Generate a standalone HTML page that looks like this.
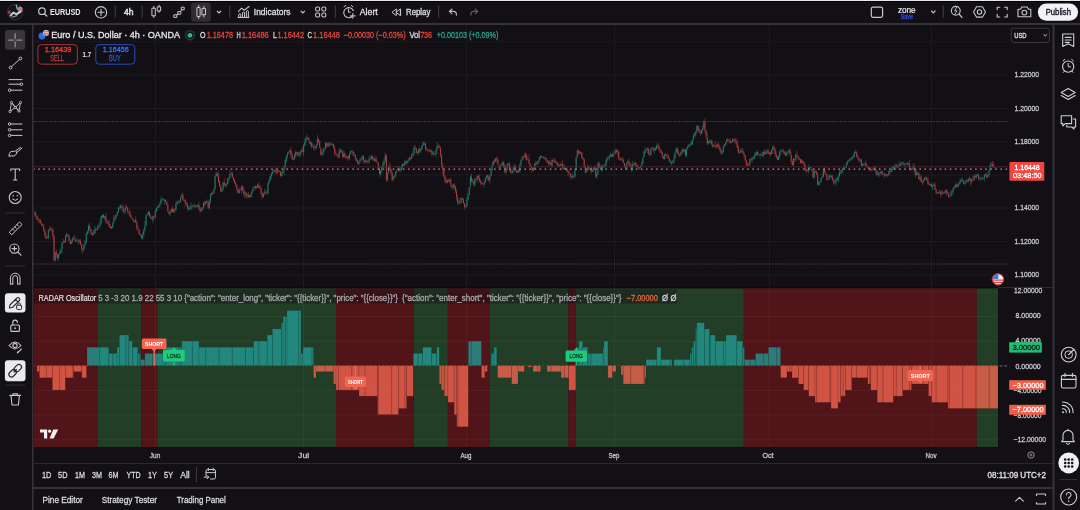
<!DOCTYPE html>
<html><head><meta charset="utf-8"><style>
html,body{margin:0;padding:0;background:#121014;}
body{width:1080px;height:510px;overflow:hidden;position:relative;font-family:"Liberation Sans",sans-serif;}
svg{position:absolute;left:0;top:0;will-change:transform;}
text{font-family:"Liberation Sans",sans-serif;}
</style></head><body>
<svg width="1080" height="510" viewBox="0 0 1080 510" shape-rendering="auto">
<rect x="0" y="0" width="1080" height="1" fill="#e9e7ec" />
<rect x="0" y="1" width="1080" height="1" fill="#000" />
<rect x="0" y="23" width="1080" height="2" fill="#35323a" />
<rect x="32" y="25" width="1.5" height="485" fill="#35323a" />
<rect x="1052.5" y="25" width="2" height="485" fill="#35323a" />
<rect x="33" y="287" width="965" height="1" fill="#0c0b0d" />
<rect x="998" y="287" width="55" height="1" fill="#2c2a30" />
<path d="M1000 366H1002.2M1004.4 366H1006.6" stroke="#77757b" stroke-width="1"/>
<rect x="33" y="463" width="1020" height="1" fill="#2a282d" />
<rect x="33" y="487" width="1020" height="2" fill="#35323a" />
<rect x="34" y="41.2" width="974" height="1" fill="#1c1a1f" />
<rect x="34" y="74.5" width="974" height="1" fill="#1c1a1f" />
<rect x="34" y="108" width="974" height="1" fill="#1c1a1f" />
<rect x="34" y="141.5" width="974" height="1" fill="#1c1a1f" />
<rect x="34" y="174.5" width="974" height="1" fill="#1c1a1f" />
<rect x="34" y="207.5" width="974" height="1" fill="#1c1a1f" />
<rect x="34" y="241" width="974" height="1" fill="#1c1a1f" />
<rect x="34" y="274.5" width="974" height="1" fill="#1c1a1f" />
<rect x="155" y="25" width="1" height="422" fill="#1c1a1f" />
<rect x="303" y="25" width="1" height="422" fill="#1c1a1f" />
<rect x="466" y="25" width="1" height="422" fill="#1c1a1f" />
<rect x="614" y="25" width="1" height="422" fill="#1c1a1f" />
<rect x="769" y="25" width="1" height="422" fill="#1c1a1f" />
<rect x="931" y="25" width="1" height="422" fill="#1c1a1f" />
<rect x="34.0" y="288.5" width="64.0" height="158.5" fill="#511519" />
<rect x="98.0" y="288.5" width="43.5" height="158.5" fill="#233e27" />
<rect x="141.5" y="288.5" width="16.0" height="158.5" fill="#511519" />
<rect x="157.5" y="288.5" width="178.5" height="158.5" fill="#233e27" />
<rect x="336.0" y="288.5" width="77.8" height="158.5" fill="#511519" />
<rect x="413.8" y="288.5" width="34.1" height="158.5" fill="#233e27" />
<rect x="447.9" y="288.5" width="42.1" height="158.5" fill="#511519" />
<rect x="490.0" y="288.5" width="78.5" height="158.5" fill="#233e27" />
<rect x="568.5" y="288.5" width="7.5" height="158.5" fill="#511519" />
<rect x="576.0" y="288.5" width="167.8" height="158.5" fill="#233e27" />
<rect x="743.8" y="288.5" width="233.0" height="158.5" fill="#511519" />
<rect x="976.8" y="288.5" width="21.2" height="158.5" fill="#233e27" />
<rect x="155" y="288.5" width="1" height="158.5" fill="rgba(255,255,255,0.04)" />
<rect x="303" y="288.5" width="1" height="158.5" fill="rgba(255,255,255,0.04)" />
<rect x="466" y="288.5" width="1" height="158.5" fill="rgba(255,255,255,0.04)" />
<rect x="614" y="288.5" width="1" height="158.5" fill="rgba(255,255,255,0.04)" />
<rect x="769" y="288.5" width="1" height="158.5" fill="rgba(255,255,255,0.04)" />
<rect x="931" y="288.5" width="1" height="158.5" fill="rgba(255,255,255,0.04)" />
<rect x="34" y="291.4" width="964" height="1" fill="rgba(255,255,255,0.045)" />
<rect x="34" y="316.0" width="964" height="1" fill="rgba(255,255,255,0.045)" />
<rect x="34" y="340.7" width="964" height="1" fill="rgba(255,255,255,0.045)" />
<rect x="34" y="389.9" width="964" height="1" fill="rgba(255,255,255,0.045)" />
<rect x="34" y="414.6" width="964" height="1" fill="rgba(255,255,255,0.045)" />
<rect x="34" y="439.2" width="964" height="1" fill="rgba(255,255,255,0.045)" />
<rect x="34" y="289.5" width="643" height="14" fill="rgba(14,12,16,0.36)" />
<rect x="37.0" y="365.6" width="2.4" height="6.1" fill="rgba(248,102,82,0.76)" stroke="rgba(0,0,0,0.18)" stroke-width="0.6"/>
<rect x="39.4" y="365.6" width="13.0" height="12.2" fill="rgba(248,102,82,0.76)" stroke="rgba(0,0,0,0.18)" stroke-width="0.6"/>
<rect x="52.4" y="365.6" width="12.9" height="24.5" fill="rgba(248,102,82,0.76)" stroke="rgba(0,0,0,0.18)" stroke-width="0.6"/>
<rect x="65.3" y="365.6" width="8.2" height="12.2" fill="rgba(248,102,82,0.76)" stroke="rgba(0,0,0,0.18)" stroke-width="0.6"/>
<rect x="73.5" y="365.6" width="8.3" height="6.1" fill="rgba(248,102,82,0.76)" stroke="rgba(0,0,0,0.18)" stroke-width="0.6"/>
<rect x="81.8" y="365.6" width="4.7" height="12.2" fill="rgba(248,102,82,0.76)" stroke="rgba(0,0,0,0.18)" stroke-width="0.6"/>
<rect x="87.0" y="347.2" width="21.8" height="18.4" fill="rgba(34,160,155,0.74)" stroke="rgba(0,0,0,0.18)" stroke-width="0.6"/>
<rect x="108.8" y="353.4" width="8.2" height="12.2" fill="rgba(34,160,155,0.74)" stroke="rgba(0,0,0,0.18)" stroke-width="0.6"/>
<rect x="117.0" y="347.2" width="2.4" height="18.4" fill="rgba(34,160,155,0.74)" stroke="rgba(0,0,0,0.18)" stroke-width="0.6"/>
<rect x="119.4" y="335.0" width="9.4" height="30.6" fill="rgba(34,160,155,0.74)" stroke="rgba(0,0,0,0.18)" stroke-width="0.6"/>
<rect x="128.8" y="341.1" width="3.6" height="24.5" fill="rgba(34,160,155,0.74)" stroke="rgba(0,0,0,0.18)" stroke-width="0.6"/>
<rect x="132.4" y="347.2" width="5.4" height="18.4" fill="rgba(34,160,155,0.74)" stroke="rgba(0,0,0,0.18)" stroke-width="0.6"/>
<rect x="137.8" y="353.4" width="2.8" height="12.2" fill="rgba(34,160,155,0.74)" stroke="rgba(0,0,0,0.18)" stroke-width="0.6"/>
<rect x="140.6" y="359.5" width="4.2" height="6.1" fill="rgba(34,160,155,0.74)" stroke="rgba(0,0,0,0.18)" stroke-width="0.6"/>
<rect x="144.8" y="353.4" width="18.2" height="12.2" fill="rgba(34,160,155,0.74)" stroke="rgba(0,0,0,0.18)" stroke-width="0.6"/>
<rect x="163.0" y="347.2" width="18.8" height="18.4" fill="rgba(34,160,155,0.74)" stroke="rgba(0,0,0,0.18)" stroke-width="0.6"/>
<rect x="181.8" y="341.1" width="17.2" height="24.5" fill="rgba(34,160,155,0.74)" stroke="rgba(0,0,0,0.18)" stroke-width="0.6"/>
<rect x="199.0" y="347.2" width="54.5" height="18.4" fill="rgba(34,160,155,0.74)" stroke="rgba(0,0,0,0.18)" stroke-width="0.6"/>
<rect x="253.5" y="341.1" width="13.7" height="24.5" fill="rgba(34,160,155,0.74)" stroke="rgba(0,0,0,0.18)" stroke-width="0.6"/>
<rect x="267.2" y="335.0" width="5.2" height="30.6" fill="rgba(34,160,155,0.74)" stroke="rgba(0,0,0,0.18)" stroke-width="0.6"/>
<rect x="272.4" y="328.9" width="8.9" height="36.8" fill="rgba(34,160,155,0.74)" stroke="rgba(0,0,0,0.18)" stroke-width="0.6"/>
<rect x="281.3" y="322.7" width="1.7" height="42.9" fill="rgba(34,160,155,0.74)" stroke="rgba(0,0,0,0.18)" stroke-width="0.6"/>
<rect x="283.0" y="316.6" width="4.0" height="49.0" fill="rgba(34,160,155,0.74)" stroke="rgba(0,0,0,0.18)" stroke-width="0.6"/>
<rect x="287.0" y="310.5" width="14.0" height="55.1" fill="rgba(34,160,155,0.74)" stroke="rgba(0,0,0,0.18)" stroke-width="0.6"/>
<rect x="301.0" y="353.4" width="2.0" height="12.2" fill="rgba(34,160,155,0.74)" stroke="rgba(0,0,0,0.18)" stroke-width="0.6"/>
<rect x="303.0" y="347.2" width="10.5" height="18.4" fill="rgba(34,160,155,0.74)" stroke="rgba(0,0,0,0.18)" stroke-width="0.6"/>
<rect x="313.5" y="365.6" width="2.5" height="12.2" fill="rgba(248,102,82,0.76)" stroke="rgba(0,0,0,0.18)" stroke-width="0.6"/>
<rect x="316.0" y="365.6" width="17.5" height="6.1" fill="rgba(248,102,82,0.76)" stroke="rgba(0,0,0,0.18)" stroke-width="0.6"/>
<rect x="333.5" y="365.6" width="2.5" height="18.4" fill="rgba(248,102,82,0.76)" stroke="rgba(0,0,0,0.18)" stroke-width="0.6"/>
<rect x="336.0" y="365.6" width="23.0" height="24.5" fill="rgba(248,102,82,0.76)" stroke="rgba(0,0,0,0.18)" stroke-width="0.6"/>
<rect x="359.0" y="365.6" width="18.6" height="30.6" fill="rgba(248,102,82,0.76)" stroke="rgba(0,0,0,0.18)" stroke-width="0.6"/>
<rect x="377.6" y="365.6" width="20.9" height="49.0" fill="rgba(248,102,82,0.76)" stroke="rgba(0,0,0,0.18)" stroke-width="0.6"/>
<rect x="398.5" y="365.6" width="8.1" height="42.9" fill="rgba(248,102,82,0.76)" stroke="rgba(0,0,0,0.18)" stroke-width="0.6"/>
<rect x="406.6" y="365.6" width="6.7" height="30.6" fill="rgba(248,102,82,0.76)" stroke="rgba(0,0,0,0.18)" stroke-width="0.6"/>
<rect x="413.3" y="353.4" width="9.4" height="12.2" fill="rgba(34,160,155,0.74)" stroke="rgba(0,0,0,0.18)" stroke-width="0.6"/>
<rect x="422.7" y="347.2" width="8.9" height="18.4" fill="rgba(34,160,155,0.74)" stroke="rgba(0,0,0,0.18)" stroke-width="0.6"/>
<rect x="431.6" y="353.4" width="5.1" height="12.2" fill="rgba(34,160,155,0.74)" stroke="rgba(0,0,0,0.18)" stroke-width="0.6"/>
<rect x="436.7" y="347.2" width="2.6" height="18.4" fill="rgba(34,160,155,0.74)" stroke="rgba(0,0,0,0.18)" stroke-width="0.6"/>
<rect x="439.3" y="365.6" width="2.2" height="18.4" fill="rgba(248,102,82,0.76)" stroke="rgba(0,0,0,0.18)" stroke-width="0.6"/>
<rect x="441.5" y="365.6" width="2.5" height="24.5" fill="rgba(248,102,82,0.76)" stroke="rgba(0,0,0,0.18)" stroke-width="0.6"/>
<rect x="444.0" y="365.6" width="3.9" height="30.6" fill="rgba(248,102,82,0.76)" stroke="rgba(0,0,0,0.18)" stroke-width="0.6"/>
<rect x="447.9" y="365.6" width="6.3" height="36.8" fill="rgba(248,102,82,0.76)" stroke="rgba(0,0,0,0.18)" stroke-width="0.6"/>
<rect x="454.2" y="365.6" width="2.6" height="49.0" fill="rgba(248,102,82,0.76)" stroke="rgba(0,0,0,0.18)" stroke-width="0.6"/>
<rect x="456.8" y="365.6" width="11.5" height="61.2" fill="rgba(248,102,82,0.76)" stroke="rgba(0,0,0,0.18)" stroke-width="0.6"/>
<rect x="468.3" y="341.1" width="13.2" height="24.5" fill="rgba(34,160,155,0.74)" stroke="rgba(0,0,0,0.18)" stroke-width="0.6"/>
<rect x="481.5" y="365.6" width="3.3" height="12.2" fill="rgba(248,102,82,0.76)" stroke="rgba(0,0,0,0.18)" stroke-width="0.6"/>
<rect x="484.8" y="365.6" width="2.6" height="6.1" fill="rgba(248,102,82,0.76)" stroke="rgba(0,0,0,0.18)" stroke-width="0.6"/>
<rect x="491.2" y="353.4" width="2.8" height="12.2" fill="rgba(34,160,155,0.74)" stroke="rgba(0,0,0,0.18)" stroke-width="0.6"/>
<rect x="494.0" y="347.2" width="2.8" height="18.4" fill="rgba(34,160,155,0.74)" stroke="rgba(0,0,0,0.18)" stroke-width="0.6"/>
<rect x="497.6" y="365.6" width="14.0" height="12.2" fill="rgba(248,102,82,0.76)" stroke="rgba(0,0,0,0.18)" stroke-width="0.6"/>
<rect x="511.6" y="365.6" width="6.4" height="18.4" fill="rgba(248,102,82,0.76)" stroke="rgba(0,0,0,0.18)" stroke-width="0.6"/>
<rect x="518.0" y="365.6" width="6.4" height="6.1" fill="rgba(248,102,82,0.76)" stroke="rgba(0,0,0,0.18)" stroke-width="0.6"/>
<rect x="527.9" y="365.6" width="3.8" height="1.5" fill="rgba(248,102,82,0.76)" stroke="rgba(0,0,0,0.18)" stroke-width="0.6"/>
<rect x="533.0" y="365.6" width="7.6" height="6.1" fill="rgba(248,102,82,0.76)" stroke="rgba(0,0,0,0.18)" stroke-width="0.6"/>
<rect x="547.0" y="365.6" width="14.0" height="6.1" fill="rgba(248,102,82,0.76)" stroke="rgba(0,0,0,0.18)" stroke-width="0.6"/>
<rect x="561.0" y="365.6" width="7.7" height="12.2" fill="rgba(248,102,82,0.76)" stroke="rgba(0,0,0,0.18)" stroke-width="0.6"/>
<rect x="568.7" y="365.6" width="7.1" height="24.5" fill="rgba(248,102,82,0.76)" stroke="rgba(0,0,0,0.18)" stroke-width="0.6"/>
<rect x="575.8" y="347.2" width="3.1" height="18.4" fill="rgba(34,160,155,0.74)" stroke="rgba(0,0,0,0.18)" stroke-width="0.6"/>
<rect x="578.9" y="341.1" width="3.8" height="24.5" fill="rgba(34,160,155,0.74)" stroke="rgba(0,0,0,0.18)" stroke-width="0.6"/>
<rect x="582.7" y="347.2" width="5.1" height="18.4" fill="rgba(34,160,155,0.74)" stroke="rgba(0,0,0,0.18)" stroke-width="0.6"/>
<rect x="587.8" y="353.4" width="15.2" height="12.2" fill="rgba(34,160,155,0.74)" stroke="rgba(0,0,0,0.18)" stroke-width="0.6"/>
<rect x="603.0" y="347.2" width="1.0" height="18.4" fill="rgba(34,160,155,0.74)" stroke="rgba(0,0,0,0.18)" stroke-width="0.6"/>
<rect x="604.0" y="341.1" width="3.9" height="24.5" fill="rgba(34,160,155,0.74)" stroke="rgba(0,0,0,0.18)" stroke-width="0.6"/>
<rect x="607.9" y="365.6" width="4.5" height="12.2" fill="rgba(248,102,82,0.76)" stroke="rgba(0,0,0,0.18)" stroke-width="0.6"/>
<rect x="612.4" y="365.6" width="3.6" height="6.1" fill="rgba(248,102,82,0.76)" stroke="rgba(0,0,0,0.18)" stroke-width="0.6"/>
<rect x="621.0" y="365.6" width="2.2" height="9.2" fill="rgba(248,102,82,0.76)" stroke="rgba(0,0,0,0.18)" stroke-width="0.6"/>
<rect x="623.2" y="365.6" width="21.6" height="18.4" fill="rgba(248,102,82,0.76)" stroke="rgba(0,0,0,0.18)" stroke-width="0.6"/>
<rect x="644.8" y="365.6" width="1.2" height="12.2" fill="rgba(248,102,82,0.76)" stroke="rgba(0,0,0,0.18)" stroke-width="0.6"/>
<rect x="646.0" y="359.5" width="10.8" height="6.1" fill="rgba(34,160,155,0.74)" stroke="rgba(0,0,0,0.18)" stroke-width="0.6"/>
<rect x="656.8" y="347.2" width="4.2" height="18.4" fill="rgba(34,160,155,0.74)" stroke="rgba(0,0,0,0.18)" stroke-width="0.6"/>
<rect x="661.0" y="359.5" width="11.0" height="6.1" fill="rgba(34,160,155,0.74)" stroke="rgba(0,0,0,0.18)" stroke-width="0.6"/>
<rect x="673.8" y="359.5" width="16.2" height="6.1" fill="rgba(34,160,155,0.74)" stroke="rgba(0,0,0,0.18)" stroke-width="0.6"/>
<rect x="690.0" y="353.4" width="1.7" height="12.2" fill="rgba(34,160,155,0.74)" stroke="rgba(0,0,0,0.18)" stroke-width="0.6"/>
<rect x="691.7" y="347.2" width="1.8" height="18.4" fill="rgba(34,160,155,0.74)" stroke="rgba(0,0,0,0.18)" stroke-width="0.6"/>
<rect x="693.5" y="341.1" width="2.0" height="24.5" fill="rgba(34,160,155,0.74)" stroke="rgba(0,0,0,0.18)" stroke-width="0.6"/>
<rect x="695.5" y="328.9" width="1.3" height="36.8" fill="rgba(34,160,155,0.74)" stroke="rgba(0,0,0,0.18)" stroke-width="0.6"/>
<rect x="696.8" y="322.7" width="7.6" height="42.9" fill="rgba(34,160,155,0.74)" stroke="rgba(0,0,0,0.18)" stroke-width="0.6"/>
<rect x="704.4" y="328.9" width="5.1" height="36.8" fill="rgba(34,160,155,0.74)" stroke="rgba(0,0,0,0.18)" stroke-width="0.6"/>
<rect x="709.5" y="335.0" width="5.9" height="30.6" fill="rgba(34,160,155,0.74)" stroke="rgba(0,0,0,0.18)" stroke-width="0.6"/>
<rect x="715.4" y="341.1" width="10.6" height="24.5" fill="rgba(34,160,155,0.74)" stroke="rgba(0,0,0,0.18)" stroke-width="0.6"/>
<rect x="726.0" y="335.0" width="10.8" height="30.6" fill="rgba(34,160,155,0.74)" stroke="rgba(0,0,0,0.18)" stroke-width="0.6"/>
<rect x="736.8" y="341.1" width="5.9" height="24.5" fill="rgba(34,160,155,0.74)" stroke="rgba(0,0,0,0.18)" stroke-width="0.6"/>
<rect x="742.7" y="347.2" width="1.8" height="18.4" fill="rgba(34,160,155,0.74)" stroke="rgba(0,0,0,0.18)" stroke-width="0.6"/>
<rect x="744.5" y="359.5" width="11.0" height="6.1" fill="rgba(34,160,155,0.74)" stroke="rgba(0,0,0,0.18)" stroke-width="0.6"/>
<rect x="755.5" y="353.4" width="12.9" height="12.2" fill="rgba(34,160,155,0.74)" stroke="rgba(0,0,0,0.18)" stroke-width="0.6"/>
<rect x="768.4" y="347.2" width="12.2" height="18.4" fill="rgba(34,160,155,0.74)" stroke="rgba(0,0,0,0.18)" stroke-width="0.6"/>
<rect x="780.6" y="365.6" width="6.4" height="12.2" fill="rgba(248,102,82,0.76)" stroke="rgba(0,0,0,0.18)" stroke-width="0.6"/>
<rect x="787.0" y="365.6" width="5.0" height="6.1" fill="rgba(248,102,82,0.76)" stroke="rgba(0,0,0,0.18)" stroke-width="0.6"/>
<rect x="792.0" y="365.6" width="6.5" height="12.2" fill="rgba(248,102,82,0.76)" stroke="rgba(0,0,0,0.18)" stroke-width="0.6"/>
<rect x="798.5" y="365.6" width="5.1" height="18.4" fill="rgba(248,102,82,0.76)" stroke="rgba(0,0,0,0.18)" stroke-width="0.6"/>
<rect x="803.6" y="365.6" width="5.1" height="24.5" fill="rgba(248,102,82,0.76)" stroke="rgba(0,0,0,0.18)" stroke-width="0.6"/>
<rect x="808.7" y="365.6" width="6.3" height="30.6" fill="rgba(248,102,82,0.76)" stroke="rgba(0,0,0,0.18)" stroke-width="0.6"/>
<rect x="815.0" y="365.6" width="16.0" height="36.8" fill="rgba(248,102,82,0.76)" stroke="rgba(0,0,0,0.18)" stroke-width="0.6"/>
<rect x="831.0" y="365.6" width="7.0" height="42.9" fill="rgba(248,102,82,0.76)" stroke="rgba(0,0,0,0.18)" stroke-width="0.6"/>
<rect x="838.0" y="365.6" width="2.7" height="36.8" fill="rgba(248,102,82,0.76)" stroke="rgba(0,0,0,0.18)" stroke-width="0.6"/>
<rect x="840.7" y="365.6" width="4.6" height="30.6" fill="rgba(248,102,82,0.76)" stroke="rgba(0,0,0,0.18)" stroke-width="0.6"/>
<rect x="845.3" y="365.6" width="6.4" height="24.5" fill="rgba(248,102,82,0.76)" stroke="rgba(0,0,0,0.18)" stroke-width="0.6"/>
<rect x="851.7" y="365.6" width="16.1" height="12.2" fill="rgba(248,102,82,0.76)" stroke="rgba(0,0,0,0.18)" stroke-width="0.6"/>
<rect x="867.8" y="365.6" width="3.0" height="18.4" fill="rgba(248,102,82,0.76)" stroke="rgba(0,0,0,0.18)" stroke-width="0.6"/>
<rect x="870.8" y="365.6" width="6.4" height="24.5" fill="rgba(248,102,82,0.76)" stroke="rgba(0,0,0,0.18)" stroke-width="0.6"/>
<rect x="877.2" y="365.6" width="16.1" height="36.8" fill="rgba(248,102,82,0.76)" stroke="rgba(0,0,0,0.18)" stroke-width="0.6"/>
<rect x="893.3" y="365.6" width="9.4" height="30.6" fill="rgba(248,102,82,0.76)" stroke="rgba(0,0,0,0.18)" stroke-width="0.6"/>
<rect x="902.7" y="365.6" width="8.8" height="24.5" fill="rgba(248,102,82,0.76)" stroke="rgba(0,0,0,0.18)" stroke-width="0.6"/>
<rect x="911.5" y="365.6" width="17.0" height="18.4" fill="rgba(248,102,82,0.76)" stroke="rgba(0,0,0,0.18)" stroke-width="0.6"/>
<rect x="928.5" y="365.6" width="3.3" height="30.6" fill="rgba(248,102,82,0.76)" stroke="rgba(0,0,0,0.18)" stroke-width="0.6"/>
<rect x="931.8" y="365.6" width="16.1" height="36.8" fill="rgba(248,102,82,0.76)" stroke="rgba(0,0,0,0.18)" stroke-width="0.6"/>
<rect x="947.9" y="365.6" width="50.1" height="42.9" fill="rgba(248,102,82,0.76)" stroke="rgba(0,0,0,0.18)" stroke-width="0.6"/>
<path d="M46.32 365.6V377.9 M59.60 365.6V390.1 M72.88 365.6V377.9 M99.44 347.2V365.6 M112.72 353.4V365.6 M126.00 335.0V365.6 M139.28 353.4V365.6 M152.56 353.4V365.6 M165.84 347.2V365.6 M179.12 347.2V365.6 M192.40 341.1V365.6 M205.68 347.2V365.6 M218.96 347.2V365.6 M232.24 347.2V365.6 M245.52 347.2V365.6 M258.80 341.1V365.6 M285.36 316.6V365.6 M298.64 310.5V365.6 M311.92 347.2V365.6 M325.20 365.6V371.7 M338.48 365.6V390.1 M351.76 365.6V390.1 M365.04 365.6V396.2 M378.32 365.6V414.6 M391.60 365.6V414.6 M404.88 365.6V408.5 M418.16 353.4V365.6 M444.72 365.6V396.2 M458.00 365.6V426.9 M471.28 341.1V365.6 M537.68 365.6V371.7 M550.96 365.6V371.7 M564.24 365.6V377.9 M577.52 347.2V365.6 M590.80 353.4V365.6 M630.64 365.6V384.0 M643.92 365.6V384.0 M670.48 359.5V365.6 M683.76 359.5V365.6 M710.32 335.0V365.6 M723.60 341.1V365.6 M750.16 359.5V365.6 M763.44 353.4V365.6 M776.72 347.2V365.6 M790.00 365.6V371.7 M816.56 365.6V402.4 M829.84 365.6V402.4 M843.12 365.6V396.2 M856.40 365.6V377.9 M869.68 365.6V384.0 M882.96 365.6V402.4 M896.24 365.6V396.2 M909.52 365.6V390.1 M922.80 365.6V384.0 M936.08 365.6V402.4 M949.36 365.6V408.5 M962.64 365.6V408.5 M975.92 365.6V408.5 M989.20 365.6V408.5" stroke="rgba(10,10,12,0.28)" stroke-width="0.9"/>
<line x1="34" y1="365.6" x2="1008" y2="365.6" stroke="rgba(200,200,210,0.14)" stroke-width="1" stroke-dasharray="2 2"/>
<path d="M41.40 221.5V226.0 M47.15 236.4V238.7 M48.30 229.7V238.5 M49.45 226.0V231.7 M55.20 251.5V261.1 M58.65 253.4V260.2 M59.80 249.7V254.9 M60.95 247.5V254.0 M62.10 241.9V252.9 M63.25 239.0V243.4 M65.55 234.7V243.3 M66.70 232.8V237.7 M71.30 239.5V244.2 M72.45 237.5V243.0 M77.05 238.0V242.1 M78.20 239.2V244.5 M83.95 244.1V251.0 M85.10 240.3V247.4 M86.25 232.1V244.2 M87.40 230.0V234.9 M88.55 224.2V234.3 M93.15 229.9V235.8 M94.30 226.1V234.0 M95.45 227.3V234.0 M97.75 224.6V229.8 M98.90 224.6V229.1 M100.05 219.2V227.7 M101.20 215.7V224.7 M102.35 214.6V218.6 M104.65 216.0V219.6 M111.55 226.2V229.2 M112.70 222.2V228.5 M113.85 214.9V224.3 M116.15 214.0V219.7 M117.30 211.4V215.7 M118.45 206.7V212.9 M120.75 204.5V209.9 M124.20 209.1V214.4 M125.35 205.3V213.5 M134.55 220.5V221.7 M142.60 232.3V239.9 M143.75 228.4V236.3 M144.90 221.0V231.7 M146.05 214.8V226.3 M147.20 212.9V216.1 M148.35 210.6V214.8 M152.95 215.6V223.3 M155.25 209.4V218.7 M156.40 207.6V212.2 M157.55 205.6V210.5 M158.70 205.0V207.9 M159.85 201.6V207.8 M161.00 196.5V204.0 M162.15 197.4V200.3 M163.30 198.4V200.5 M164.45 199.2V204.7 M170.20 210.1V215.9 M171.35 208.0V212.0 M173.65 208.7V213.2 M175.95 201.6V211.8 M177.10 200.4V204.8 M179.40 200.5V202.5 M180.55 196.7V202.9 M181.70 193.4V198.1 M188.60 205.3V211.0 M190.90 202.1V210.6 M193.20 205.2V208.9 M194.35 203.4V206.4 M196.65 205.0V207.5 M197.80 204.0V207.4 M201.25 207.3V211.8 M202.40 207.2V211.3 M203.55 201.5V209.2 M205.85 200.8V205.5 M209.30 199.2V210.0 M210.45 192.9V203.6 M211.60 192.4V196.5 M213.90 188.6V194.2 M215.05 174.9V190.3 M216.20 171.9V176.4 M221.95 188.2V192.3 M223.10 181.9V191.0 M225.40 183.3V187.5 M226.55 182.5V187.4 M227.70 177.7V185.2 M228.85 177.0V182.4 M230.00 169.8V178.3 M231.15 172.1V174.1 M239.20 187.5V193.7 M240.35 188.5V190.3 M241.50 185.4V193.7 M244.95 190.5V198.3 M247.25 193.5V198.6 M249.55 195.2V198.1 M250.70 193.4V197.3 M251.85 190.6V197.9 M253.00 187.0V192.0 M254.15 186.1V188.4 M257.60 183.4V188.0 M263.35 192.7V197.9 M264.50 189.0V195.3 M267.95 182.1V194.2 M269.10 178.1V184.8 M270.25 175.6V181.1 M271.40 172.2V179.1 M272.55 169.9V174.8 M273.70 169.5V173.4 M277.15 169.9V174.1 M281.75 171.3V177.5 M282.90 169.9V173.9 M284.05 165.3V175.4 M285.20 159.0V169.1 M286.35 155.1V162.9 M287.50 151.5V158.8 M288.65 151.0V154.1 M289.80 149.0V153.0 M293.25 157.2V160.4 M294.40 153.4V160.1 M295.55 150.4V157.7 M299.00 151.5V156.9 M300.15 151.2V157.0 M301.30 149.2V154.9 M303.60 144.3V156.1 M304.75 138.3V146.9 M305.90 135.8V145.3 M307.05 134.0V139.8 M310.50 141.7V145.5 M315.10 146.5V150.1 M316.25 144.2V149.6 M317.40 134.8V146.0 M322.00 151.2V156.6 M323.15 147.1V156.1 M324.30 147.6V152.1 M325.45 141.9V149.5 M327.75 142.0V147.4 M328.90 141.5V147.1 M332.35 142.9V145.2 M339.25 148.4V158.0 M340.40 148.0V153.3 M343.85 150.4V157.7 M347.30 155.9V160.0 M349.60 153.0V159.9 M350.75 150.4V154.8 M354.20 152.0V156.5 M358.80 161.7V165.6 M359.95 158.5V164.2 M361.10 157.6V160.9 M362.25 155.0V160.0 M366.85 160.1V164.2 M369.15 155.8V163.7 M370.30 155.7V159.7 M371.45 154.7V159.6 M374.90 156.4V161.9 M380.65 169.6V177.5 M381.80 165.8V173.2 M382.95 160.5V168.3 M384.10 157.6V167.9 M385.25 152.5V162.4 M387.55 172.1V181.9 M388.70 164.8V173.7 M393.30 175.4V180.6 M394.45 175.0V177.8 M395.60 171.5V177.8 M396.75 169.6V173.8 M397.90 165.8V171.4 M400.20 167.3V172.0 M401.35 164.5V170.9 M402.50 163.5V169.2 M404.80 159.7V165.6 M407.10 160.2V164.7 M408.25 158.2V163.1 M409.40 156.3V160.4 M411.70 153.1V159.1 M412.85 151.3V156.5 M414.00 145.2V156.3 M418.60 148.1V155.3 M420.90 147.7V153.1 M422.05 144.8V150.1 M423.20 141.2V146.0 M424.35 141.7V145.6 M432.40 150.7V155.6 M435.85 148.7V157.8 M437.00 141.9V154.2 M447.35 178.9V183.2 M449.65 178.2V182.9 M453.10 183.9V190.0 M458.85 200.1V204.4 M461.15 197.2V203.4 M465.75 205.2V208.0 M466.90 197.5V207.4 M468.05 192.8V200.1 M469.20 186.7V195.1 M470.35 175.4V188.8 M474.95 176.9V186.8 M477.25 175.0V182.9 M484.15 180.8V187.7 M485.30 177.3V183.5 M486.45 175.0V179.0 M489.90 175.7V183.6 M491.05 168.8V176.5 M492.20 161.9V171.6 M493.35 160.4V165.6 M495.65 157.8V162.2 M500.25 164.6V169.7 M501.40 163.3V166.7 M502.55 161.2V165.4 M506.00 167.0V174.7 M507.15 163.2V171.8 M508.30 162.9V165.7 M512.90 167.4V173.8 M514.05 163.8V171.4 M517.50 170.3V172.7 M518.65 168.5V173.0 M519.80 163.2V173.0 M520.95 159.2V166.7 M522.10 156.0V161.1 M523.25 155.9V159.2 M525.55 152.3V159.9 M533.60 166.8V171.0 M534.75 162.3V169.5 M537.05 160.9V164.6 M538.20 159.8V165.5 M539.35 156.8V162.5 M540.50 155.3V159.2 M545.10 156.3V159.7 M549.70 160.0V164.7 M552.00 157.7V167.9 M558.90 163.7V167.3 M561.20 161.4V166.1 M564.65 164.3V170.1 M571.55 174.5V178.0 M572.70 172.4V178.7 M575.00 168.1V177.2 M576.15 156.5V170.8 M577.30 148.8V157.7 M579.60 151.1V154.4 M586.50 169.4V173.4 M587.65 164.4V171.5 M589.95 167.2V170.6 M592.25 168.9V172.2 M593.40 167.2V171.9 M596.85 172.8V178.4 M598.00 161.8V174.9 M600.30 164.6V169.4 M602.60 165.1V171.5 M604.90 163.3V168.5 M606.05 159.0V166.7 M607.20 156.0V162.5 M608.35 156.0V159.2 M609.50 154.5V160.9 M610.65 151.8V157.1 M612.95 150.8V157.5 M614.10 152.9V155.5 M615.25 148.8V154.6 M626.75 162.6V169.2 M627.90 159.7V164.0 M632.50 161.0V171.2 M633.65 163.1V165.7 M634.80 160.9V165.3 M637.10 164.5V168.1 M639.40 167.1V169.9 M640.55 165.5V168.3 M641.70 161.1V166.6 M642.85 157.4V164.2 M644.00 150.9V158.1 M645.15 147.0V154.3 M646.30 148.0V150.7 M647.45 147.2V153.3 M650.90 147.4V155.9 M654.35 147.3V153.5 M655.50 146.8V150.9 M656.65 144.6V149.9 M664.70 153.8V159.9 M670.45 159.9V163.5 M672.75 160.1V163.4 M673.90 155.0V164.3 M675.05 150.7V159.1 M676.20 147.7V153.1 M680.80 152.1V156.0 M681.95 149.2V154.2 M684.25 148.7V152.6 M686.55 147.4V158.0 M687.70 145.2V149.6 M688.85 144.0V147.7 M690.00 143.7V147.2 M691.15 141.1V145.4 M692.30 139.1V145.1 M693.45 133.2V140.3 M694.60 132.6V136.5 M695.75 130.2V138.0 M696.90 125.3V133.1 M701.50 129.1V134.4 M702.65 125.3V132.9 M703.80 120.7V130.0 M708.40 140.7V144.6 M710.70 139.4V144.1 M714.15 144.7V147.2 M717.60 142.0V147.6 M722.20 150.1V154.9 M723.35 144.5V152.5 M724.50 144.1V147.4 M725.65 141.9V146.0 M726.80 138.8V143.6 M731.40 140.8V143.2 M732.55 138.3V142.9 M739.45 149.3V153.6 M740.60 148.6V153.1 M741.75 147.8V152.8 M749.80 158.8V166.0 M752.10 157.2V163.1 M754.40 152.4V159.6 M755.55 151.9V156.7 M756.70 150.3V155.8 M759.00 153.9V156.2 M760.15 153.9V158.7 M762.45 151.3V156.9 M763.60 151.0V157.9 M765.90 150.2V154.5 M767.05 148.9V154.4 M769.35 151.9V155.0 M771.65 149.3V154.8 M772.80 145.4V153.8 M778.55 154.9V160.6 M779.70 150.4V158.7 M780.85 149.7V154.9 M782.00 149.5V151.8 M786.60 152.2V156.5 M787.75 150.1V153.8 M788.90 150.2V156.1 M793.50 157.8V166.6 M795.80 153.1V161.5 M801.55 159.0V163.7 M808.45 164.4V173.6 M810.75 166.7V170.6 M814.20 169.9V179.5 M818.80 180.2V185.2 M819.95 181.3V185.7 M821.10 177.3V183.1 M822.25 173.5V178.3 M823.40 168.1V177.4 M829.15 173.6V180.3 M830.30 174.9V177.5 M834.90 178.9V183.9 M836.05 177.7V186.5 M837.20 176.6V181.0 M838.35 173.4V182.9 M839.50 170.0V176.9 M840.65 169.6V173.9 M841.80 168.6V174.6 M842.95 167.1V172.9 M844.10 165.1V168.2 M845.25 166.8V167.9 M846.40 161.7V168.6 M847.55 159.9V165.2 M848.70 159.4V163.1 M849.85 157.3V161.1 M851.00 157.6V161.6 M852.15 155.9V160.1 M853.30 153.6V158.9 M854.45 151.3V157.2 M860.20 159.0V162.3 M862.50 162.9V167.1 M864.80 162.3V165.1 M869.40 166.4V171.5 M871.70 168.8V171.4 M872.85 168.4V170.7 M874.00 166.7V169.0 M878.60 170.8V177.4 M879.75 172.4V176.4 M880.90 170.8V174.4 M886.65 174.1V176.0 M888.95 170.0V176.1 M891.25 167.5V172.5 M892.40 165.6V171.5 M894.70 164.6V169.9 M895.85 163.9V167.6 M898.15 164.8V169.2 M899.30 160.9V167.1 M900.45 162.4V166.0 M901.60 161.3V165.5 M902.75 161.5V164.9 M903.90 161.8V165.6 M906.20 163.3V164.6 M908.50 162.8V165.6 M911.95 167.8V170.3 M913.10 163.6V170.6 M916.55 169.7V175.7 M920.00 174.4V181.6 M923.45 179.2V183.5 M924.60 177.3V180.9 M930.35 183.6V185.9 M932.65 184.6V190.5 M933.80 182.4V186.0 M938.40 191.3V194.0 M939.55 189.3V192.9 M941.85 189.9V195.0 M944.15 191.7V193.5 M945.30 189.7V193.7 M949.90 196.0V197.7 M951.05 189.9V196.6 M952.20 189.6V196.0 M953.35 186.3V193.6 M954.50 185.7V189.0 M955.65 182.4V187.7 M957.95 183.3V188.1 M959.10 181.6V186.1 M960.25 178.1V184.3 M962.55 177.6V182.0 M964.85 181.9V185.7 M966.00 179.1V183.5 M968.30 178.0V183.5 M969.45 176.2V180.9 M971.75 178.7V184.2 M974.05 175.1V181.1 M976.35 173.8V179.2 M980.95 176.4V181.4 M982.10 176.6V179.0 M983.25 177.7V179.5 M984.40 174.7V181.7 M987.85 174.1V178.3 M989.00 169.5V177.1 M990.15 162.9V171.5 M991.30 161.9V166.2 M994.75 166.6V168.3" stroke="#2a8c7c" stroke-width="0.5" opacity="0.85"/>
<path d="M34.50 211.5V215.2 M35.65 211.1V217.3 M36.80 214.8V220.2 M37.95 215.6V222.7 M39.10 218.5V223.0 M40.25 218.8V224.1 M42.55 223.2V226.3 M43.70 223.8V231.9 M44.85 229.2V237.8 M46.00 232.7V240.4 M50.60 226.6V230.5 M51.75 227.9V232.7 M52.90 227.2V239.7 M54.05 234.4V262.2 M56.35 249.0V257.6 M57.50 254.1V260.7 M64.40 240.7V242.9 M67.85 233.5V235.5 M69.00 233.8V242.2 M70.15 239.0V244.7 M73.60 235.9V239.7 M74.75 234.9V241.2 M75.90 238.0V242.2 M79.35 239.2V244.0 M80.50 239.1V244.9 M81.65 243.8V251.9 M82.80 248.3V253.9 M89.70 223.0V230.6 M90.85 228.5V234.5 M92.00 232.3V235.8 M96.60 228.6V230.9 M103.50 213.4V218.4 M105.80 213.3V223.6 M106.95 219.5V223.4 M108.10 220.7V225.0 M109.25 220.0V227.8 M110.40 223.6V228.6 M115.00 215.3V220.8 M119.60 205.5V208.8 M121.90 205.8V207.8 M123.05 203.8V212.6 M126.50 204.6V208.6 M127.65 206.9V213.6 M128.80 210.8V214.1 M129.95 208.9V217.3 M131.10 214.7V218.1 M132.25 217.6V220.1 M133.40 218.5V222.6 M135.70 215.8V223.4 M136.85 220.3V231.2 M138.00 225.2V229.9 M139.15 229.0V235.2 M140.30 233.7V235.7 M141.45 234.2V238.4 M149.50 210.9V216.8 M150.65 213.9V218.5 M151.80 216.7V220.0 M154.10 215.2V219.0 M165.60 199.4V203.1 M166.75 201.0V205.5 M167.90 203.4V212.4 M169.05 211.3V215.2 M172.50 205.7V213.0 M174.80 208.2V213.4 M178.25 200.2V202.9 M182.85 192.4V200.5 M184.00 198.5V201.2 M185.15 199.0V206.8 M186.30 201.3V205.6 M187.45 202.2V210.5 M189.75 206.0V209.6 M192.05 204.3V207.4 M195.50 205.1V207.9 M198.95 201.6V210.4 M200.10 206.7V212.9 M204.70 200.9V206.7 M207.00 199.3V202.7 M208.15 200.7V209.0 M212.75 191.6V194.3 M217.35 172.2V177.3 M218.50 171.3V182.6 M219.65 180.4V187.3 M220.80 184.6V192.4 M224.25 178.0V186.2 M232.30 171.8V178.3 M233.45 176.7V181.6 M234.60 179.3V183.6 M235.75 181.8V187.3 M236.90 184.6V191.3 M238.05 189.4V193.5 M242.65 185.2V191.2 M243.80 186.6V197.0 M246.10 192.3V197.8 M248.40 191.9V198.1 M255.30 184.9V190.8 M256.45 186.2V188.7 M258.75 182.3V189.1 M259.90 185.3V188.5 M261.05 184.9V194.7 M262.20 192.1V199.9 M265.65 189.9V193.6 M266.80 191.2V194.8 M274.85 168.7V171.5 M276.00 167.4V174.7 M278.30 169.9V172.5 M279.45 170.2V172.1 M280.60 171.1V176.7 M290.95 146.5V157.4 M292.10 151.8V160.2 M296.70 151.7V156.3 M297.85 151.4V155.7 M302.45 146.8V152.1 M308.20 136.4V140.6 M309.35 137.6V144.7 M311.65 141.1V148.7 M312.80 143.6V146.6 M313.95 144.2V150.5 M318.55 138.5V142.9 M319.70 140.4V148.3 M320.85 146.8V155.1 M326.60 142.8V147.7 M330.05 142.6V146.2 M331.20 142.9V145.6 M333.50 143.9V148.4 M334.65 145.5V156.3 M335.80 150.0V154.8 M336.95 153.7V156.3 M338.10 152.9V158.9 M341.55 149.8V152.7 M342.70 149.6V158.3 M345.00 152.5V158.8 M346.15 155.8V159.0 M348.45 155.2V161.3 M351.90 150.5V152.5 M353.05 150.5V156.1 M355.35 154.5V161.2 M356.50 157.9V161.8 M357.65 159.5V164.6 M363.40 155.2V163.9 M364.55 159.9V162.7 M365.70 158.0V162.6 M368.00 159.9V162.4 M372.60 155.6V160.7 M373.75 157.5V161.3 M376.05 155.6V162.5 M377.20 159.8V163.3 M378.35 162.4V170.5 M379.50 166.6V174.6 M386.40 153.7V181.8 M389.85 162.6V171.8 M391.00 168.5V175.6 M392.15 170.6V181.6 M399.05 166.2V171.7 M403.65 163.1V166.9 M405.95 160.7V165.0 M410.55 157.0V160.7 M415.15 144.8V149.4 M416.30 147.8V153.2 M417.45 151.2V154.7 M419.75 146.3V153.0 M425.50 142.8V151.3 M426.65 146.6V150.6 M427.80 149.2V152.6 M428.95 148.9V151.0 M430.10 148.6V151.8 M431.25 149.1V156.0 M433.55 151.1V155.4 M434.70 153.5V154.6 M438.15 143.5V148.5 M439.30 144.3V148.5 M440.45 146.5V157.3 M441.60 154.1V167.9 M442.75 163.3V174.8 M443.90 169.4V178.2 M445.05 175.0V183.1 M446.20 177.1V183.7 M448.50 178.9V182.2 M450.80 177.8V186.7 M451.95 185.5V188.8 M454.25 183.1V189.1 M455.40 185.6V193.0 M456.55 188.8V200.6 M457.70 195.3V204.8 M460.00 197.5V204.2 M462.30 197.6V199.8 M463.45 198.3V203.8 M464.60 202.8V209.9 M471.50 173.6V182.8 M472.65 178.6V183.2 M473.80 179.4V186.3 M476.10 178.1V180.1 M478.40 174.0V179.7 M479.55 175.0V182.9 M480.70 179.1V185.7 M481.85 181.5V184.1 M483.00 182.5V185.1 M487.60 174.9V180.7 M488.75 174.3V181.8 M494.50 159.0V163.3 M496.80 156.2V162.5 M497.95 158.0V165.2 M499.10 165.7V170.1 M503.70 160.9V167.9 M504.85 164.1V173.5 M509.45 161.7V172.0 M510.60 165.9V173.2 M511.75 169.5V173.8 M515.20 164.5V171.6 M516.35 170.1V173.0 M524.40 152.9V157.3 M526.70 153.3V160.9 M527.85 157.1V160.3 M529.00 154.0V164.2 M530.15 163.0V167.1 M531.30 164.9V172.5 M532.45 167.3V170.9 M535.90 160.6V165.4 M541.65 155.5V157.6 M542.80 156.0V158.0 M543.95 156.7V159.4 M546.25 158.0V162.5 M547.40 160.3V163.1 M548.55 160.4V166.1 M550.85 161.9V165.7 M553.15 159.4V163.0 M554.30 158.1V163.2 M555.45 158.6V162.9 M556.60 161.4V165.0 M557.75 161.7V167.5 M560.05 163.6V167.2 M562.35 159.6V170.1 M563.50 164.4V169.5 M565.80 166.3V170.9 M566.95 167.3V172.3 M568.10 170.2V176.7 M569.25 170.2V174.3 M570.40 173.1V179.5 M573.85 174.7V178.6 M578.45 149.2V155.0 M580.75 150.9V154.3 M581.90 152.3V158.6 M583.05 157.0V160.5 M584.20 158.3V167.9 M585.35 165.7V173.4 M588.80 165.8V169.9 M591.10 165.4V174.5 M594.55 165.8V169.9 M595.70 165.4V178.4 M599.15 161.4V167.9 M601.45 164.6V171.6 M603.75 163.8V167.4 M611.80 153.9V157.5 M616.40 148.9V153.2 M617.55 149.2V155.6 M618.70 150.3V159.6 M619.85 157.3V160.9 M621.00 156.9V161.0 M622.15 157.4V160.4 M623.30 157.5V163.2 M624.45 162.7V167.6 M625.60 165.6V170.1 M629.05 158.3V167.1 M630.20 163.7V167.3 M631.35 162.7V171.8 M635.95 162.4V167.0 M638.25 164.6V169.3 M648.60 148.2V155.5 M649.75 151.4V156.4 M652.05 147.1V148.6 M653.20 146.5V151.7 M657.80 143.2V149.1 M658.95 143.3V151.4 M660.10 148.2V153.5 M661.25 149.4V153.8 M662.40 151.5V158.7 M663.55 155.6V159.2 M665.85 152.7V156.0 M667.00 154.2V158.3 M668.15 153.2V159.2 M669.30 157.6V161.9 M671.60 160.7V165.9 M677.35 146.6V153.6 M678.50 149.9V155.8 M679.65 153.3V157.7 M683.10 148.3V153.6 M685.40 148.8V156.7 M698.05 125.0V131.3 M699.20 126.6V133.1 M700.35 130.3V136.0 M704.95 118.0V133.1 M706.10 129.7V138.6 M707.25 132.6V145.2 M709.55 139.2V142.9 M711.85 139.7V146.2 M713.00 143.4V148.1 M715.30 141.3V147.6 M716.45 144.2V148.9 M718.75 143.3V148.9 M719.90 146.1V151.7 M721.05 148.8V155.0 M727.95 137.6V141.9 M729.10 139.7V142.8 M730.25 138.2V143.8 M733.70 138.5V141.6 M734.85 137.8V143.4 M736.00 137.9V145.3 M737.15 140.2V148.9 M738.30 145.9V154.0 M742.90 148.1V153.7 M744.05 152.0V157.2 M745.20 154.6V161.7 M746.35 159.7V166.2 M747.50 162.5V166.8 M748.65 163.3V165.8 M750.95 158.2V162.0 M753.25 156.0V159.3 M757.85 151.3V155.8 M761.30 151.9V155.8 M764.75 148.8V155.3 M768.20 148.7V154.0 M770.50 152.3V156.3 M773.95 144.8V150.3 M775.10 148.2V156.0 M776.25 151.0V158.7 M777.40 155.9V160.2 M783.15 148.4V153.8 M784.30 151.2V155.1 M785.45 150.8V156.3 M790.05 147.6V154.7 M791.20 152.4V164.2 M792.35 159.1V165.9 M794.65 157.9V162.4 M796.95 150.7V156.8 M798.10 155.5V160.7 M799.25 157.4V159.8 M800.40 158.4V163.6 M802.70 159.6V163.5 M803.85 161.0V166.6 M805.00 162.5V171.4 M806.15 168.0V173.3 M807.30 168.9V172.1 M809.60 167.0V169.3 M811.90 168.4V171.5 M813.05 168.1V177.9 M815.35 170.2V173.5 M816.50 170.6V175.2 M817.65 172.8V185.8 M824.55 166.9V173.1 M825.70 171.2V175.4 M826.85 174.2V180.8 M828.00 178.1V179.7 M831.45 174.9V179.1 M832.60 175.3V180.9 M833.75 179.6V185.5 M855.60 149.5V153.2 M856.75 150.7V157.6 M857.90 154.3V160.0 M859.05 157.5V162.5 M861.35 158.2V166.2 M863.65 163.0V165.3 M865.95 160.1V166.8 M867.10 164.5V168.1 M868.25 166.0V169.5 M870.55 166.9V170.8 M875.15 165.3V171.5 M876.30 169.1V175.7 M877.45 170.8V175.3 M882.05 169.7V176.4 M883.20 173.0V174.6 M884.35 172.4V177.9 M885.50 173.5V177.0 M887.80 174.0V177.9 M890.10 169.7V174.6 M893.55 165.9V170.1 M897.00 163.6V168.5 M905.05 163.2V168.0 M907.35 161.6V164.9 M909.65 159.6V169.7 M910.80 168.1V170.9 M914.25 163.4V172.4 M915.40 168.4V177.6 M917.70 171.5V175.2 M918.85 172.3V179.6 M921.15 174.9V181.9 M922.30 180.1V185.3 M925.75 176.4V180.1 M926.90 176.5V181.3 M928.05 177.4V184.7 M929.20 182.3V186.1 M931.50 183.0V187.7 M934.95 182.2V190.0 M936.10 188.6V194.6 M937.25 192.0V193.9 M940.70 190.4V197.5 M943.00 190.9V193.9 M946.45 188.9V195.9 M947.60 189.7V194.0 M948.75 191.9V197.7 M956.80 184.0V187.4 M961.40 177.9V182.4 M963.70 180.1V184.3 M967.15 179.2V182.3 M970.60 177.8V185.6 M972.90 175.5V180.4 M975.20 173.9V178.2 M977.50 173.4V175.7 M978.65 173.5V180.8 M979.80 176.8V179.4 M985.55 173.0V176.3 M986.70 172.7V178.6 M992.45 161.0V167.5 M993.60 161.6V167.0" stroke="#c4484a" stroke-width="0.5" opacity="0.85"/>
<path d="M41.40 223.8V224.7 M47.15 237.5V238.4 M48.30 230.4V238.1 M49.45 228.7V230.4 M55.20 252.2V260.5 M58.65 254.0V258.2 M59.80 252.5V254.0 M60.95 249.7V252.6 M62.10 242.9V249.0 M63.25 241.5V242.9 M65.55 236.2V241.9 M66.70 234.1V236.9 M71.30 241.6V243.8 M72.45 238.5V241.7 M77.05 241.1V242.0 M78.20 240.5V241.4 M83.95 244.6V249.6 M85.10 241.6V244.6 M86.25 234.1V241.6 M87.40 231.4V234.1 M88.55 225.8V231.4 M93.15 232.5V235.2 M94.30 230.7V233.3 M95.45 229.2V230.7 M97.75 226.1V229.4 M98.90 225.7V226.7 M100.05 222.6V225.7 M101.20 216.0V222.6 M102.35 215.0V217.4 M104.65 216.5V217.7 M111.55 226.9V228.2 M112.70 222.6V227.5 M113.85 217.6V222.6 M116.15 214.6V217.9 M117.30 212.2V214.6 M118.45 207.8V212.2 M120.75 204.9V208.3 M124.20 210.3V211.6 M125.35 207.7V210.3 M134.55 220.8V221.7 M142.60 235.3V239.0 M143.75 230.4V235.1 M144.90 225.4V230.4 M146.05 215.4V225.4 M147.20 214.5V215.4 M148.35 212.1V214.5 M152.95 216.3V220.7 M155.25 211.0V216.9 M156.40 208.0V211.0 M157.55 206.9V208.0 M158.70 205.8V207.1 M159.85 203.6V205.8 M161.00 199.7V203.6 M162.15 199.6V200.5 M163.30 198.7V199.6 M164.45 199.8V200.7 M170.20 210.9V213.7 M171.35 209.1V211.1 M173.65 209.3V212.0 M175.95 203.6V209.6 M177.10 201.8V204.3 M179.40 201.9V202.8 M180.55 197.4V201.9 M181.70 194.9V197.4 M188.60 208.2V209.1 M190.90 205.9V209.2 M193.20 205.7V206.6 M194.35 205.6V206.5 M196.65 206.1V207.0 M197.80 204.9V206.1 M201.25 208.8V211.0 M202.40 207.6V208.8 M203.55 203.0V207.5 M205.85 201.2V203.7 M209.30 201.1V208.1 M210.45 194.8V201.1 M211.60 193.0V195.1 M213.90 189.2V193.2 M215.05 176.1V189.2 M216.20 173.5V176.1 M221.95 188.8V191.6 M223.10 182.3V188.8 M225.40 184.9V185.8 M226.55 184.4V185.3 M227.70 178.7V184.0 M228.85 177.9V179.5 M230.00 173.8V177.9 M231.15 173.3V174.2 M239.20 189.4V193.0 M240.35 189.4V190.3 M241.50 186.3V189.4 M244.95 192.6V194.2 M247.25 194.7V195.9 M249.55 195.6V197.1 M250.70 194.1V196.9 M251.85 191.3V194.1 M253.00 188.0V191.3 M254.15 186.5V188.0 M257.60 184.4V187.3 M263.35 193.2V196.9 M264.50 192.5V193.4 M267.95 183.1V193.2 M269.10 180.3V183.1 M270.25 176.1V180.3 M271.40 173.3V176.1 M272.55 171.8V173.2 M273.70 170.3V171.5 M277.15 170.4V172.7 M281.75 172.9V175.8 M282.90 171.2V172.9 M284.05 167.0V171.2 M285.20 160.1V167.0 M286.35 156.2V160.8 M287.50 153.4V156.2 M288.65 152.9V153.8 M289.80 150.4V152.1 M293.25 159.0V159.9 M294.40 155.2V159.0 M295.55 152.2V155.2 M299.00 153.6V155.9 M300.15 151.8V153.9 M301.30 149.6V151.8 M303.60 144.8V152.4 M304.75 142.2V145.3 M305.90 138.0V142.2 M307.05 137.9V139.4 M310.50 142.8V143.7 M315.10 147.0V148.1 M316.25 145.0V148.2 M317.40 138.6V145.0 M322.00 153.3V155.2 M323.15 149.5V153.3 M324.30 148.5V149.7 M325.45 143.2V148.5 M327.75 144.7V146.1 M328.90 143.4V146.5 M332.35 144.3V145.2 M339.25 150.4V157.2 M340.40 150.2V151.1 M343.85 153.6V157.1 M347.30 156.5V157.7 M349.60 153.5V158.3 M350.75 150.8V153.7 M354.20 154.9V155.8 M358.80 162.0V164.0 M359.95 160.3V162.0 M361.10 158.2V160.3 M362.25 156.1V158.2 M366.85 161.4V162.3 M369.15 158.6V161.7 M370.30 158.4V159.3 M371.45 156.3V158.4 M374.90 158.6V161.1 M380.65 170.8V174.3 M381.80 167.0V171.1 M382.95 163.3V167.6 M384.10 161.4V164.5 M385.25 155.3V161.4 M387.55 173.0V179.9 M388.70 166.4V172.4 M393.30 177.0V179.9 M394.45 175.8V177.0 M395.60 171.8V175.8 M396.75 170.5V171.8 M397.90 168.4V169.7 M400.20 170.0V170.9 M401.35 167.2V170.0 M402.50 164.0V167.2 M404.80 161.5V165.1 M407.10 161.0V163.0 M408.25 159.7V161.0 M409.40 158.1V159.9 M411.70 154.9V158.5 M412.85 153.9V154.9 M414.00 147.6V153.9 M418.60 149.4V152.6 M420.90 149.1V150.9 M422.05 145.1V149.1 M423.20 142.4V145.5 M424.35 143.6V144.5 M432.40 152.5V153.4 M435.85 150.5V154.1 M437.00 146.2V150.5 M447.35 180.3V182.9 M449.65 180.2V181.1 M453.10 184.6V187.7 M458.85 202.0V202.9 M461.15 198.2V202.3 M465.75 206.0V207.0 M466.90 199.7V206.0 M468.05 194.8V199.7 M469.20 187.3V194.8 M470.35 176.7V186.1 M474.95 179.4V184.6 M477.25 176.2V179.7 M484.15 182.3V184.5 M485.30 178.2V182.3 M486.45 175.7V178.2 M489.90 176.0V180.5 M491.05 169.3V176.0 M492.20 164.9V169.3 M493.35 161.0V164.9 M495.65 158.4V161.5 M500.25 165.2V167.7 M501.40 164.5V165.4 M502.55 162.4V164.6 M506.00 170.1V172.2 M507.15 164.3V170.1 M508.30 163.5V164.4 M512.90 170.0V172.6 M514.05 166.1V170.0 M517.50 171.6V172.5 M518.65 170.1V171.6 M519.80 164.8V171.5 M520.95 160.3V164.8 M522.10 158.7V159.9 M523.25 156.5V158.7 M525.55 154.0V156.5 M533.60 168.1V170.5 M534.75 163.4V168.8 M537.05 162.4V164.2 M538.20 160.9V162.4 M539.35 157.3V160.6 M540.50 156.1V157.3 M545.10 158.3V159.2 M549.70 162.3V164.1 M552.00 160.0V166.2 M558.90 164.9V165.8 M561.20 164.0V165.2 M564.65 168.2V169.1 M571.55 176.8V177.7 M572.70 176.3V177.2 M575.00 169.7V176.7 M576.15 157.4V169.9 M577.30 150.6V157.4 M579.60 151.9V152.8 M586.50 171.0V172.0 M587.65 167.3V170.6 M589.95 168.3V169.2 M592.25 169.9V171.5 M593.40 167.6V169.9 M596.85 173.3V176.8 M598.00 163.4V173.3 M600.30 166.8V168.2 M602.60 165.9V169.6 M604.90 165.0V166.3 M606.05 159.9V165.0 M607.20 158.0V159.9 M608.35 157.6V158.5 M609.50 156.0V157.6 M610.65 154.2V156.0 M612.95 154.1V156.8 M614.10 153.3V154.2 M615.25 150.3V153.3 M626.75 163.1V168.8 M627.90 161.4V163.1 M632.50 164.8V169.9 M633.65 164.5V165.4 M634.80 163.0V164.5 M637.10 166.1V167.0 M639.40 167.6V168.5 M640.55 166.3V167.6 M641.70 163.5V166.3 M642.85 157.7V163.5 M644.00 151.4V157.1 M645.15 150.2V152.9 M646.30 149.2V150.2 M647.45 148.6V149.5 M650.90 148.6V154.8 M654.35 149.0V150.4 M655.50 148.5V150.0 M656.65 145.3V148.5 M664.70 154.3V159.1 M670.45 161.9V162.8 M672.75 161.9V163.0 M673.90 158.6V161.9 M675.05 152.6V158.6 M676.20 148.5V152.6 M680.80 152.4V155.2 M681.95 149.9V153.0 M684.25 150.3V151.3 M686.55 148.9V155.6 M687.70 146.5V148.9 M688.85 145.0V146.5 M690.00 144.5V145.4 M691.15 142.4V144.5 M692.30 139.8V144.8 M693.45 135.5V139.8 M694.60 134.1V135.5 M695.75 131.6V135.1 M696.90 125.6V131.6 M701.50 130.3V133.4 M702.65 127.7V130.3 M703.80 121.5V127.7 M708.40 141.3V143.4 M710.70 140.7V142.2 M714.15 145.7V146.7 M717.60 144.5V146.4 M722.20 151.6V153.1 M723.35 146.3V151.6 M724.50 145.0V146.3 M725.65 142.2V145.0 M726.80 139.4V142.2 M731.40 141.9V142.8 M732.55 139.3V141.9 M739.45 152.0V152.9 M740.60 151.4V152.3 M741.75 150.8V151.7 M749.80 159.2V164.7 M752.10 157.6V160.3 M754.40 156.0V158.4 M755.55 154.3V156.0 M756.70 151.8V154.8 M759.00 154.4V155.3 M760.15 154.2V155.1 M762.45 154.8V155.7 M763.60 151.8V154.8 M765.90 152.8V154.1 M767.05 150.8V152.8 M769.35 152.7V154.0 M771.65 149.9V154.0 M772.80 147.0V149.9 M778.55 156.3V160.0 M779.70 151.4V156.3 M780.85 150.4V151.3 M782.00 150.2V151.1 M786.60 152.8V155.2 M787.75 151.5V152.8 M788.90 150.5V151.5 M793.50 158.9V165.0 M795.80 154.7V159.5 M801.55 160.7V162.9 M808.45 167.7V171.4 M810.75 167.1V168.0 M814.20 171.1V177.6 M818.80 181.9V184.9 M819.95 181.7V182.6 M821.10 178.3V181.7 M822.25 176.9V177.8 M823.40 169.5V176.9 M829.15 175.4V178.7 M830.30 175.8V177.1 M834.90 182.4V183.3 M836.05 179.6V182.4 M837.20 178.1V179.6 M838.35 176.5V180.3 M839.50 172.4V176.5 M840.65 172.2V173.2 M841.80 170.0V172.2 M842.95 167.8V170.0 M844.10 167.5V168.4 M845.25 167.1V168.0 M846.40 163.5V167.1 M847.55 161.8V163.5 M848.70 160.5V161.4 M849.85 159.4V160.5 M851.00 158.7V159.6 M852.15 156.7V158.7 M853.30 156.5V157.4 M854.45 151.9V156.5 M860.20 159.7V160.6 M862.50 164.3V165.7 M864.80 163.8V164.7 M869.40 168.5V169.4 M871.70 169.4V170.3 M872.85 168.7V169.6 M874.00 167.3V168.7 M878.60 173.4V174.8 M879.75 173.1V174.0 M880.90 171.4V173.5 M886.65 174.4V175.5 M888.95 171.0V174.5 M891.25 169.3V171.8 M892.40 166.3V169.3 M894.70 166.6V168.5 M895.85 165.3V166.6 M898.15 165.8V167.3 M899.30 164.2V165.8 M900.45 164.5V165.4 M901.60 163.4V164.5 M902.75 162.6V163.6 M903.90 163.7V164.6 M906.20 163.7V164.6 M908.50 163.5V164.4 M911.95 168.3V169.7 M913.10 166.2V168.3 M916.55 173.2V175.1 M920.00 177.2V179.1 M923.45 180.4V181.8 M924.60 177.6V180.0 M930.35 184.0V184.9 M932.65 185.1V186.9 M933.80 184.5V185.4 M938.40 192.1V193.1 M939.55 191.7V192.6 M941.85 192.6V194.5 M944.15 192.6V193.5 M945.30 190.6V192.6 M949.90 196.5V197.4 M951.05 192.5V195.7 M952.20 190.8V192.5 M953.35 188.0V190.8 M954.50 187.0V188.0 M955.65 184.6V187.0 M957.95 183.8V186.8 M959.10 182.2V183.8 M960.25 180.5V182.2 M962.55 180.4V181.3 M964.85 182.9V183.8 M966.00 180.5V182.9 M968.30 179.0V181.1 M969.45 178.2V179.1 M971.75 179.8V181.3 M974.05 175.9V180.0 M976.35 175.2V177.3 M980.95 178.6V179.5 M982.10 178.4V179.3 M983.25 178.1V179.0 M984.40 175.0V178.1 M987.85 174.9V177.2 M989.00 170.3V174.9 M990.15 165.3V170.3 M991.30 164.6V165.5 M994.75 167.1V168.0" stroke="#2a8c7c" stroke-width="0.85" opacity="0.92"/>
<path d="M34.50 212.6V213.5 M35.65 213.2V216.3 M36.80 216.5V219.0 M37.95 218.6V219.6 M39.10 219.6V220.5 M40.25 219.6V223.2 M42.55 224.5V225.6 M43.70 225.6V230.1 M44.85 230.1V235.1 M46.00 235.1V238.3 M50.60 228.7V229.6 M51.75 229.1V230.0 M52.90 229.7V236.5 M54.05 236.5V260.3 M56.35 251.8V255.2 M57.50 255.2V258.2 M64.40 241.5V242.4 M67.85 234.7V235.6 M69.00 235.6V240.3 M70.15 240.3V243.8 M73.60 238.0V238.9 M74.75 239.6V240.5 M75.90 240.2V241.2 M79.35 240.5V241.4 M80.50 241.3V244.2 M81.65 244.2V249.1 M82.80 249.1V250.0 M89.70 225.8V229.0 M90.85 229.0V233.2 M92.00 233.2V235.2 M96.60 229.2V230.1 M103.50 215.0V217.7 M105.80 216.3V221.3 M106.95 221.3V222.2 M108.10 222.2V224.1 M109.25 224.1V227.0 M110.40 227.0V228.2 M115.00 217.6V218.5 M119.60 207.8V208.7 M121.90 206.3V207.2 M123.05 206.8V211.6 M126.50 207.2V208.1 M127.65 207.5V211.4 M128.80 211.6V212.6 M129.95 212.6V215.8 M131.10 215.8V217.7 M132.25 218.2V219.2 M133.40 219.2V220.5 M135.70 219.8V222.5 M136.85 222.5V227.9 M138.00 227.9V229.5 M139.15 229.5V234.3 M140.30 234.3V235.2 M141.45 235.0V238.1 M149.50 212.5V216.3 M150.65 216.3V218.1 M151.80 218.1V219.0 M154.10 216.3V217.2 M165.60 199.8V201.7 M166.75 201.7V204.7 M167.90 204.7V211.4 M169.05 212.0V213.7 M172.50 208.9V212.0 M174.80 208.9V209.8 M178.25 201.8V202.7 M182.85 194.9V200.1 M184.00 200.1V201.0 M185.15 200.2V202.8 M186.30 202.8V204.7 M187.45 204.7V208.3 M189.75 208.1V209.2 M192.05 205.9V206.8 M195.50 206.4V207.3 M198.95 204.9V208.6 M200.10 208.6V211.0 M204.70 203.0V203.9 M207.00 201.2V202.4 M208.15 202.4V207.5 M212.75 193.0V193.9 M217.35 173.5V175.7 M218.50 175.7V181.9 M219.65 180.7V185.9 M220.80 185.9V191.6 M224.25 182.3V185.4 M232.30 173.3V176.9 M233.45 177.3V179.8 M234.60 179.8V182.9 M235.75 182.9V185.4 M236.90 185.4V190.1 M238.05 190.1V193.0 M242.65 186.3V190.4 M243.80 190.4V194.1 M246.10 192.6V195.8 M248.40 194.7V197.1 M255.30 186.5V188.2 M256.45 187.2V188.1 M258.75 185.3V187.5 M259.90 187.5V188.4 M261.05 188.1V193.7 M262.20 193.7V196.9 M265.65 192.5V193.4 M266.80 193.2V194.1 M274.85 170.3V171.2 M276.00 170.5V172.8 M278.30 170.4V171.5 M279.45 171.5V172.4 M280.60 171.5V175.8 M290.95 150.2V155.1 M292.10 155.1V159.1 M296.70 152.2V153.3 M297.85 152.4V155.3 M302.45 151.2V152.1 M308.20 137.9V140.1 M309.35 141.1V142.9 M311.65 142.8V146.9 M312.80 146.1V147.0 M313.95 146.2V148.1 M318.55 139.0V141.4 M319.70 141.4V147.5 M320.85 148.6V154.8 M326.60 143.2V146.1 M330.05 143.4V144.3 M331.20 143.9V144.8 M333.50 144.3V147.6 M334.65 147.6V152.9 M335.80 152.9V153.9 M336.95 154.1V155.5 M338.10 155.5V157.2 M341.55 150.3V152.4 M342.70 152.4V157.1 M345.00 153.6V156.3 M346.15 156.3V157.7 M348.45 156.5V157.9 M351.90 150.8V151.7 M353.05 151.6V154.3 M355.35 155.1V159.2 M356.50 159.2V160.1 M357.65 159.8V163.3 M363.40 156.1V160.5 M364.55 161.3V162.4 M365.70 160.2V162.2 M368.00 161.4V162.3 M372.60 156.3V159.4 M373.75 159.4V160.3 M376.05 158.6V161.4 M377.20 162.0V163.0 M378.35 163.0V168.2 M379.50 168.2V174.3 M386.40 155.5V179.9 M389.85 166.4V169.1 M391.00 169.1V172.8 M392.15 172.8V179.9 M399.05 168.4V170.9 M403.65 164.0V164.9 M405.95 161.5V163.0 M410.55 158.1V159.0 M415.15 147.6V148.5 M416.30 148.2V152.8 M417.45 152.1V153.0 M419.75 149.4V151.6 M425.50 143.6V148.6 M426.65 148.6V149.5 M427.80 149.5V150.6 M428.95 150.6V151.5 M430.10 150.6V151.5 M431.25 150.8V152.6 M433.55 152.5V154.0 M434.70 154.0V154.9 M438.15 146.0V146.9 M439.30 146.5V147.8 M440.45 147.8V155.2 M441.60 155.2V164.7 M442.75 164.7V170.1 M443.90 170.1V176.5 M445.05 176.5V181.0 M446.20 180.7V182.9 M448.50 180.3V181.2 M450.80 180.2V185.8 M451.95 185.8V187.7 M454.25 184.6V186.3 M455.40 186.3V191.4 M456.55 191.4V197.4 M457.70 197.8V202.5 M460.00 202.0V202.9 M462.30 198.3V199.2 M463.45 198.8V203.3 M464.60 203.3V207.0 M471.50 176.7V181.1 M472.65 181.1V182.0 M473.80 181.9V184.6 M476.10 179.4V180.3 M478.40 176.2V178.3 M479.55 178.3V181.1 M480.70 181.1V183.1 M481.85 183.1V184.0 M483.00 183.8V184.7 M487.60 175.2V176.7 M488.75 176.7V180.5 M494.50 160.8V161.7 M496.80 158.4V160.1 M497.95 160.1V164.6 M499.10 166.2V167.7 M503.70 162.4V166.3 M504.85 165.7V172.2 M509.45 163.5V168.9 M510.60 168.9V172.0 M511.75 172.0V172.9 M515.20 166.1V170.0 M516.35 170.5V172.5 M524.40 156.3V157.2 M526.70 155.5V159.2 M527.85 159.2V160.1 M529.00 159.9V163.6 M530.15 163.6V166.4 M531.30 166.4V167.9 M532.45 167.9V170.5 M535.90 163.4V164.9 M541.65 156.1V157.3 M542.80 157.3V158.2 M543.95 157.6V158.5 M546.25 158.3V160.9 M547.40 160.9V161.8 M548.55 161.3V164.1 M550.85 162.5V164.7 M553.15 160.0V160.9 M554.30 160.9V161.8 M555.45 160.8V162.5 M556.60 162.5V163.4 M557.75 163.3V165.5 M560.05 164.9V165.8 M562.35 164.0V168.0 M563.50 168.0V168.9 M565.80 168.2V169.3 M566.95 168.4V171.2 M568.10 171.2V172.7 M569.25 172.7V173.7 M570.40 173.7V176.8 M573.85 176.3V177.2 M578.45 150.6V152.8 M580.75 151.9V153.5 M581.90 152.8V158.1 M583.05 158.1V159.3 M584.20 159.3V166.3 M585.35 166.3V172.6 M588.80 167.3V168.6 M591.10 168.3V171.5 M594.55 167.6V168.9 M595.70 168.9V176.8 M599.15 163.4V167.6 M601.45 166.8V169.6 M603.75 165.8V166.7 M611.80 154.2V156.8 M616.40 150.3V151.9 M617.55 151.1V152.2 M618.70 152.2V158.9 M619.85 158.9V159.8 M621.00 159.2V160.1 M622.15 159.4V160.3 M623.30 159.9V162.9 M624.45 163.1V166.5 M625.60 166.5V168.8 M629.05 161.4V164.8 M630.20 164.8V166.6 M631.35 166.6V169.5 M635.95 163.0V166.5 M638.25 165.6V168.2 M648.60 148.6V153.5 M649.75 153.5V154.8 M652.05 147.6V148.5 M653.20 148.0V149.6 M657.80 145.3V146.2 M658.95 145.9V149.0 M660.10 149.5V151.0 M661.25 151.0V153.1 M662.40 153.1V156.6 M663.55 156.6V158.7 M665.85 154.3V155.3 M667.00 155.3V156.2 M668.15 155.7V158.0 M669.30 158.0V161.4 M671.60 162.1V163.3 M677.35 148.5V152.6 M678.50 152.6V154.8 M679.65 154.8V155.7 M683.10 148.7V151.3 M685.40 149.6V155.6 M698.05 125.6V130.3 M699.20 129.3V131.9 M700.35 131.9V133.4 M704.95 121.5V130.6 M706.10 130.7V136.3 M707.25 136.9V143.4 M709.55 142.1V143.0 M711.85 140.7V144.4 M713.00 144.4V146.7 M715.30 145.7V146.6 M716.45 146.3V147.2 M718.75 144.5V146.8 M719.90 146.8V150.0 M721.05 149.8V153.1 M727.95 139.4V140.3 M729.10 140.3V141.2 M730.25 140.9V142.7 M733.70 139.3V140.2 M734.85 139.6V141.0 M736.00 140.6V142.0 M737.15 142.0V147.1 M738.30 146.3V152.2 M742.90 150.8V153.4 M744.05 153.4V155.1 M745.20 155.2V160.4 M746.35 160.4V165.2 M747.50 165.2V166.1 M748.65 164.1V165.0 M750.95 159.2V160.3 M753.25 157.6V158.5 M757.85 151.8V154.6 M761.30 154.2V155.1 M764.75 151.8V154.1 M768.20 150.8V153.5 M770.50 152.7V154.0 M773.95 147.0V149.0 M775.10 149.0V154.2 M776.25 154.2V157.0 M777.40 157.0V159.7 M783.15 150.6V151.8 M784.30 151.8V153.4 M785.45 153.4V155.4 M790.05 149.6V154.0 M791.20 154.9V161.4 M792.35 161.4V165.0 M794.65 158.9V159.8 M796.95 154.7V155.9 M798.10 155.9V158.8 M799.25 158.8V159.7 M800.40 159.1V162.9 M802.70 160.7V162.4 M803.85 162.5V164.4 M805.00 164.4V168.7 M806.15 168.7V171.0 M807.30 170.5V171.4 M809.60 167.3V168.2 M811.90 169.6V170.8 M813.05 170.8V177.6 M815.35 171.1V172.0 M816.50 171.7V174.1 M817.65 174.1V184.9 M824.55 168.4V172.7 M825.70 172.9V175.0 M826.85 175.0V179.4 M828.00 179.3V180.2 M831.45 175.8V177.0 M832.60 177.0V180.1 M833.75 180.1V183.2 M855.60 151.9V152.8 M856.75 152.2V156.4 M857.90 156.4V158.4 M859.05 158.4V160.6 M861.35 159.7V165.7 M863.65 164.3V165.2 M865.95 162.8V166.0 M867.10 166.0V166.9 M868.25 166.8V168.8 M870.55 168.5V169.6 M875.15 167.3V170.8 M876.30 170.8V174.1 M877.45 174.1V175.0 M882.05 171.4V173.9 M883.20 173.9V174.8 M884.35 174.2V175.1 M885.50 174.6V175.5 M887.80 174.4V175.3 M890.10 171.0V171.9 M893.55 167.2V168.5 M897.00 165.3V167.3 M905.05 163.7V164.6 M907.35 163.2V164.1 M909.65 164.2V169.1 M910.80 169.1V170.0 M914.25 166.2V170.3 M915.40 170.3V175.1 M917.70 172.6V173.9 M918.85 173.0V179.1 M921.15 176.7V181.6 M922.30 181.7V183.1 M925.75 177.6V178.6 M926.90 178.2V180.4 M928.05 180.4V184.0 M929.20 184.0V184.9 M931.50 184.0V186.6 M934.95 184.5V189.4 M936.10 189.3V192.8 M937.25 192.8V193.7 M940.70 191.7V194.5 M943.00 192.6V193.5 M946.45 190.6V192.7 M947.60 192.7V193.7 M948.75 193.7V196.7 M956.80 184.6V186.8 M961.40 180.5V181.4 M963.70 180.4V183.8 M967.15 180.5V181.4 M970.60 178.6V181.3 M972.90 179.8V180.7 M975.20 175.9V177.3 M977.50 175.2V176.1 M978.65 175.3V178.5 M979.80 178.5V179.4 M985.55 173.7V175.3 M986.70 174.8V177.2 M992.45 164.0V165.9 M993.60 165.2V166.4" stroke="#c4484a" stroke-width="0.85" opacity="0.92"/>
<line x1="34" y1="121.5" x2="1008" y2="121.5" stroke="#4c4a50" stroke-width="1" stroke-dasharray="1.2 1.4"/>
<line x1="34" y1="264" x2="1008" y2="264" stroke="#4c4a50" stroke-width="1" stroke-dasharray="1.2 1.4"/>
<line x1="34" y1="166.8" x2="1008" y2="166.8" stroke="#6a2230" stroke-width="0.9" stroke-dasharray="2 0.6"/>
<line x1="34" y1="169.1" x2="1008" y2="169.1" stroke="#9e9ca2" stroke-width="1.4" stroke-dasharray="1.6 3.464" stroke-dashoffset="0.8"/>
<circle cx="15.2" cy="12.2" r="7.8" stroke="#34333a" stroke-width="0.9" fill="#13151c"/>
<ellipse cx="20.2" cy="9.6" rx="2.4" ry="3" fill="#d88ea2" opacity="0.85"/>
<ellipse cx="9.4" cy="12.2" rx="1.3" ry="2" fill="#c43a52" opacity="0.9"/>
<path d="M16.2 5.2 L17.4 9.2" stroke="#6cc9b8" stroke-width="1.3" fill="none" stroke-linecap="round" stroke-linejoin="round" />
<path d="M10.6 15.6 L13.2 12.6 L16.4 14.2 L20.4 11.8" stroke="#c9cfd2" stroke-width="2.0" fill="none" stroke-linecap="round" stroke-linejoin="round" />
<path d="M12 17.2 L17 15.6" stroke="#8e9396" stroke-width="1.2" fill="none" stroke-linecap="round" stroke-linejoin="round" />
<circle cx="42" cy="11.2" r="3.3" stroke="#c8c7cc" stroke-width="1.2" fill="none"/>
<path d="M44.4 13.6 L46.8 16" stroke="#c8c7cc" stroke-width="1.3" fill="none" stroke-linecap="round" stroke-linejoin="round" />
<text x="50.0" y="14.6" font-size="8.75" fill="#e8e7eb" font-weight="700" textLength="30.5" lengthAdjust="spacingAndGlyphs">EURUSD</text>
<circle cx="101" cy="12.3" r="5.7" stroke="#c8c7cc" stroke-width="1.1" fill="none"/>
<path d="M101 9.2V15.4M97.9 12.3H104.1" stroke="#c8c7cc" stroke-width="1.1" fill="none" stroke-linecap="round" stroke-linejoin="round" />
<rect x="114.7" y="5.8" width="1.2" height="12" fill="#3a383e" />
<rect x="141.6" y="5.8" width="1.2" height="12" fill="#3a383e" />
<rect x="229.20000000000002" y="5.8" width="1.2" height="12" fill="#3a383e" />
<rect x="334.79999999999995" y="5.8" width="1.2" height="12" fill="#3a383e" />
<rect x="438.0" y="5.8" width="1.2" height="12" fill="#3a383e" />
<rect x="942.6999999999999" y="5.8" width="1.2" height="12" fill="#3a383e" />
<text x="124.0" y="15.4" font-size="8.19" fill="#e0dfe4" font-weight="400" stroke="#e0dfe4" stroke-width="0.5" textLength="9.4" lengthAdjust="spacingAndGlyphs">4h</text>
<path d="M152.3 8.2h3v7.6h-3z M153.8 6.3v1.9 M153.8 15.8v1.7" stroke="#c8c7cc" stroke-width="1.0" fill="none" stroke-linecap="round" stroke-linejoin="round" />
<path d="M157.6 6.8h3v4.2h-3z M159.1 5.2v1.6 M159.1 11v1.4" stroke="#c8c7cc" stroke-width="1.0" fill="none" stroke-linecap="round" stroke-linejoin="round" />
<path d="M174.2 14.8h2.6v2.6h-2.6z M178.2 11.6h2.6v2.6h-2.6z M181.6 7.2h2.6v2.6h-2.6z M176.8 14.8 L178.2 14.2 M180.6 11.6 L181.8 9.8" stroke="#c8c7cc" stroke-width="1.0" fill="none" stroke-linecap="round" stroke-linejoin="round" />
<rect x="191.1" y="2.6" width="19.7" height="19.2" rx="3" fill="#2f2d33"/>
<path d="M197.3 7.6h2.8v9h-2.8z M198.7 5.6v2 M198.7 16.6v2" stroke="#c8c7cc" stroke-width="1.0" fill="none" stroke-linecap="round" stroke-linejoin="round" />
<path d="M202.3 8.6h3.2v6.2h-3.2z M203.9 6.3v2.3 M203.9 14.8v2.4" stroke="#c8c7cc" stroke-width="1.0" fill="none" stroke-linecap="round" stroke-linejoin="round" />
<path d="M217.2 11.2 L219 13 L220.8 11.2" stroke="#c8c7cc" stroke-width="1.1" fill="none" stroke-linecap="round" stroke-linejoin="round" />
<path d="M301 11.2 L302.8 13 L304.6 11.2" stroke="#c8c7cc" stroke-width="1.1" fill="none" stroke-linecap="round" stroke-linejoin="round" />
<path d="M931.4 11 L933.3 12.9 L935.2 11" stroke="#c8c7cc" stroke-width="1.1" fill="none" stroke-linecap="round" stroke-linejoin="round" />
<path d="M238.5 11.5 L241.5 8.2 L244.5 10.2 L249 6.5" stroke="#c8c7cc" stroke-width="1.1" fill="none" stroke-linecap="round" stroke-linejoin="round" />
<path d="M238.8 17.2v-2.6a1 1 0 0 1 2 0v2.6z M242.6 17.2v-4.2a1 1 0 0 1 2 0v4.2z M246.4 17.2v-5.6a1 1 0 0 1 2 0v5.6z M238 17.4h11" stroke="#c8c7cc" stroke-width="1.0" fill="none" stroke-linecap="round" stroke-linejoin="round" />
<text x="253.8" y="15.2" font-size="9.03" fill="#e0dfe4" font-weight="400" stroke="#e0dfe4" stroke-width="0.28" textLength="36.7" lengthAdjust="spacingAndGlyphs">Indicators</text>
<rect x="315.6" y="7.0" width="4.0" height="4.0" rx="1.4" fill="none" stroke="#c8c7cc" stroke-width="1.1"/>
<rect x="321.8" y="7.0" width="4.0" height="4.0" rx="1.4" fill="none" stroke="#c8c7cc" stroke-width="1.1"/>
<rect x="315.6" y="13.0" width="4.0" height="4.0" rx="1.4" fill="none" stroke="#c8c7cc" stroke-width="1.1"/>
<rect x="321.8" y="13.0" width="4.0" height="4.0" rx="1.4" fill="none" stroke="#c8c7cc" stroke-width="1.1"/>
<path d="M352.8 15.6 A5 5 0 1 1 353.5 11.2" fill="none" stroke="#c8c7cc" stroke-width="1.1"/>
<path d="M348.4 9.2v3h2 M344 6.8 L345.8 5.4 M353 6.8 L351.2 5.4 M352.8 13.4v5 M350.3 15.9h5" stroke="#c8c7cc" stroke-width="1.0" fill="none" stroke-linecap="round" stroke-linejoin="round" />
<text x="359.7" y="15.0" font-size="8.33" fill="#e0dfe4" font-weight="400" stroke="#e0dfe4" stroke-width="0.28" textLength="18.1" lengthAdjust="spacingAndGlyphs">Alert</text>
<path d="M396 9.2 L392 12.3 L396 15.4z M400 9.2 L396 12.3 L400 15.4z" stroke="#c8c7cc" stroke-width="1.0" fill="none" stroke-linecap="round" stroke-linejoin="round" />
<path d="M400.6 9.2v6.2" stroke="#c8c7cc" stroke-width="1.0" fill="none" stroke-linecap="round" stroke-linejoin="round" />
<text x="406.0" y="15.0" font-size="8.33" fill="#e0dfe4" font-weight="400" stroke="#e0dfe4" stroke-width="0.28" textLength="24.3" lengthAdjust="spacingAndGlyphs">Replay</text>
<path d="M452 9 L449.3 11.4 L452 13.8 M449.6 11.4 H453.4 a3 3 0 0 1 3 3 V15.2" stroke="#bdbcc1" stroke-width="1.1" fill="none" stroke-linecap="round" stroke-linejoin="round" />
<path d="M475.2 9 L477.9 11.4 L475.2 13.8 M477.6 11.4 H473.8 a3 3 0 0 0 -3 3 V15.2" stroke="#5e5c62" stroke-width="1.1" fill="none" stroke-linecap="round" stroke-linejoin="round" />
<rect x="871.3" y="7.2" width="11.3" height="10.2" rx="1.8" fill="none" stroke="#c8c7cc" stroke-width="1.2"/>
<text x="897.9" y="12.9" font-size="9.17" fill="#ecebef" font-weight="400" stroke="#ecebef" stroke-width="0.2" textLength="17.8" lengthAdjust="spacingAndGlyphs">zone</text>
<text x="900.8" y="18.9" font-size="6.94" fill="#2a50e2" font-weight="400" stroke="#2a50e2" stroke-width="0.28" textLength="12.2" lengthAdjust="spacingAndGlyphs">Save</text>
<circle cx="955.8" cy="10.8" r="4.4" stroke="#c8c7cc" stroke-width="1.1" fill="none"/>
<path d="M959 14 L962 17.3" stroke="#c8c7cc" stroke-width="1.2" fill="none" stroke-linecap="round" stroke-linejoin="round" />
<path d="M956.8 6.8 L954.6 10.8 H957 L954.8 14.6" stroke="#c8c7cc" stroke-width="0.9" fill="none" stroke-linecap="round" stroke-linejoin="round" />
<path d="M973.5 11.9 L976.5 6.7 H982.5 L985.5 11.9 L982.5 17.1 H976.5 Z" stroke="#c8c7cc" stroke-width="1.1" fill="none" stroke-linecap="round" stroke-linejoin="round" />
<circle cx="979.5" cy="11.9" r="2.2" stroke="#c8c7cc" stroke-width="1.1" fill="none"/>
<path d="M997.2 9.8V7.2H999.8 M1004.6 7.2H1007.2V9.8 M1007.2 14.4V17H1004.6 M999.8 17H997.2V14.4" stroke="#c8c7cc" stroke-width="1.1" fill="none" stroke-linecap="round" stroke-linejoin="round" />
<path d="M1018 9.2 H1020.6 L1021.8 7 H1027.2 L1028.4 9.2 H1030.8 V16.8 H1018 Z" stroke="#c8c7cc" stroke-width="1.1" fill="none" stroke-linecap="round" stroke-linejoin="round" />
<circle cx="1024.4" cy="12.6" r="2.4" stroke="#c8c7cc" stroke-width="1.1" fill="none"/>
<rect x="1037.9" y="3.6" width="40.1" height="17.1" rx="8.5" fill="#f3f2f5"/>
<text x="1045.7" y="14.8" font-size="9.03" fill="#0d0c1e" font-weight="400" stroke="#0d0c1e" stroke-width="0.3" textLength="25.3" lengthAdjust="spacingAndGlyphs">Publish</text>
<rect x="5" y="30" width="20.2" height="19.8" rx="3" fill="#38363b"/>
<path d="M15.2 33.6v5 M15.2 41.8v5 M8.6 40.2h5 M16.8 40.2h5" stroke="#8f8d93" stroke-width="1.3" fill="none" stroke-linecap="round" stroke-linejoin="round" />
<path d="M11.6 66.6 L19.4 59.5" stroke="#c8c7cc" stroke-width="1.0" fill="none" stroke-linecap="round" stroke-linejoin="round" />
<circle cx="10.6" cy="67.6" r="1.4" stroke="#c8c7cc" stroke-width="1.0" fill="none"/>
<circle cx="20.4" cy="58.5" r="1.4" stroke="#c8c7cc" stroke-width="1.0" fill="none"/>
<path d="M9 79.6H22 M9 84.2H20 M11 90.2H22" stroke="#c8c7cc" stroke-width="1.0" fill="none" stroke-linecap="round" stroke-linejoin="round" />
<circle cx="21.4" cy="84.2" r="1.3" stroke="#c8c7cc" stroke-width="1.0" fill="none"/>
<circle cx="9.6" cy="90.2" r="1.3" stroke="#c8c7cc" stroke-width="1.0" fill="none"/>
<path d="M10 111.5 L11.5 102.5 L19 111 L20.5 102.5 M11.5 102.5 L15.2 107.5 L20.5 102.5 M10 111.5 L15.2 107.5 L19 111" stroke="#c8c7cc" stroke-width="0.9" fill="none" stroke-linecap="round" stroke-linejoin="round" />
<circle cx="10" cy="111.5" r="1.1" stroke="#c8c7cc" stroke-width="0.9" fill="#121014"/>
<circle cx="11.5" cy="102.5" r="1.1" stroke="#c8c7cc" stroke-width="0.9" fill="#121014"/>
<circle cx="19" cy="111" r="1.1" stroke="#c8c7cc" stroke-width="0.9" fill="#121014"/>
<circle cx="20.5" cy="102.5" r="1.1" stroke="#c8c7cc" stroke-width="0.9" fill="#121014"/>
<circle cx="15.2" cy="107.5" r="1.1" stroke="#c8c7cc" stroke-width="0.9" fill="#121014"/>
<path d="M11 124H22 M11 129.8H22 M11 135.4H22" stroke="#c8c7cc" stroke-width="1.0" fill="none" stroke-linecap="round" stroke-linejoin="round" />
<circle cx="9.6" cy="124" r="1.3" stroke="#c8c7cc" stroke-width="1.0" fill="none"/>
<circle cx="9.6" cy="129.8" r="1.3" stroke="#c8c7cc" stroke-width="1.0" fill="none"/>
<circle cx="9.6" cy="135.4" r="1.3" stroke="#c8c7cc" stroke-width="1.0" fill="none"/>
<path d="M9 156 Q9 150 14.5 151.5 L20.5 147.5 M9 156 H14 Q17 155 17 151.5 M17.5 152 L22 148" stroke="#c8c7cc" stroke-width="1.0" fill="none" stroke-linecap="round" stroke-linejoin="round" />
<path d="M10.8 169H19.6 M10.8 169v1.6 M19.6 169v1.6 M15.2 169V180 M13.4 180H17" stroke="#c8c7cc" stroke-width="1.1" fill="none" stroke-linecap="round" stroke-linejoin="round" />
<circle cx="15.2" cy="197.5" r="6.0" stroke="#c8c7cc" stroke-width="1.1" fill="none"/>
<path d="M12.6 199.2 Q15.2 201.8 17.8 199.2" stroke="#c8c7cc" stroke-width="1.0" fill="none" stroke-linecap="round" stroke-linejoin="round" />
<circle cx="13.1" cy="195.8" r="0.7" fill="#c8c7cc"/><circle cx="17.3" cy="195.8" r="0.7" fill="#c8c7cc"/>
<rect x="5" y="212.4" width="20" height="1" fill="#2f2d33" />
<path d="M9.5 232 L19.5 222 L22 224.5 L12 234.5 Z M12.6 229 L14 230.4 M14.8 226.8 L16.2 228.2 M17 224.6 L18.4 226" stroke="#c8c7cc" stroke-width="1.0" fill="none" stroke-linecap="round" stroke-linejoin="round" />
<circle cx="14.4" cy="248.6" r="4.6" stroke="#c8c7cc" stroke-width="1.1" fill="none"/>
<path d="M17.8 252 L21 255.2 M14.4 246.4v4.4 M12.2 248.6h4.4" stroke="#c8c7cc" stroke-width="1.1" fill="none" stroke-linecap="round" stroke-linejoin="round" />
<rect x="5" y="265.4" width="20" height="1" fill="#2f2d33" />
<path d="M10.4 284 V278 a4.8 4.8 0 0 1 9.6 0 V284 M12.8 284 V278 a2.4 2.4 0 0 1 4.8 0 V284 M10.4 284h2.4 M17.6 284h2.4" stroke="#c8c7cc" stroke-width="1.0" fill="none" stroke-linecap="round" stroke-linejoin="round" />
<rect x="4.9" y="293.2" width="20.6" height="19.3" rx="3" fill="#ebeaee"/>
<path d="M9.4 308 L9.9 305 L16.9 298 a1.5 1.5 0 0 1 2.1 0 L19.4 298.4 a1.5 1.5 0 0 1 0 2.1 L12.4 307.5 Z M15.6 299.4 L18 301.8" stroke="#2a282d" stroke-width="1.1" fill="none" stroke-linecap="round" stroke-linejoin="round" />
<rect x="16.6" y="305.2" width="5" height="4.2" rx="0.8" fill="none" stroke="#2a282d" stroke-width="1"/>
<path d="M17.8 305.2 v-1 a1.3 1.3 0 0 1 2.6 0 v1" stroke="#2a282d" stroke-width="0.9" fill="none" stroke-linecap="round" stroke-linejoin="round" />
<rect x="10.8" y="325" width="8.6" height="6.4" rx="1" fill="none" stroke="#c8c7cc" stroke-width="1.1"/>
<path d="M12.8 325v-2.6a2.3 2.3 0 0 1 4.6 0" stroke="#c8c7cc" stroke-width="1.1" fill="none" stroke-linecap="round" stroke-linejoin="round" />
<circle cx="15.1" cy="328.2" r="0.9" fill="#c8c7cc"/>
<path d="M9 345.5 Q15 338.6 21 345.5 Q15 352.4 9 345.5Z" stroke="#c8c7cc" stroke-width="1.1" fill="none" stroke-linecap="round" stroke-linejoin="round" />
<circle cx="15" cy="345.5" r="2.1" stroke="#c8c7cc" stroke-width="1.1" fill="none"/>
<path d="M17.8 352.6 L21.4 349 M17.4 353 l0.2 -1.2" stroke="#c8c7cc" stroke-width="1.1" fill="none" stroke-linecap="round" stroke-linejoin="round" />
<rect x="4.9" y="360.2" width="20.6" height="21" rx="3" fill="#ebeaee"/>
<g transform="rotate(-45 15.2 370.7)"><rect x="7.4" y="368.1" width="8.4" height="5.2" rx="2.6" fill="none" stroke="#2a282d" stroke-width="1.2"/><rect x="14.6" y="368.1" width="8.4" height="5.2" rx="2.6" fill="none" stroke="#2a282d" stroke-width="1.2"/><path d="M13 370.7 H17.4" stroke="#2a282d" stroke-width="1.2"/></g>
<rect x="5" y="384.6" width="20" height="1" fill="#2f2d33" />
<path d="M9.8 395.4H20.6 M13 395.4 v-1.6 h4.4 v1.6 M11 395.4 L12 405 H18.4 L19.4 395.4" stroke="#c8c7cc" stroke-width="1.1" fill="none" stroke-linecap="round" stroke-linejoin="round" />
<circle cx="42" cy="36" r="3.4" fill="#2f6fd6"/><circle cx="46" cy="33" r="3" fill="#e9e7ec"/><path d="M43.6 31.3 H48.6 M44 33.2 H49 M44.2 35 H48.8" stroke="#d94545" stroke-width="0.9"/><circle cx="42" cy="36" r="3.4" fill="none" stroke="#1a4fb0" stroke-width="0.6"/>
<text x="51.3" y="38.4" font-size="8.75" fill="#e6e5ea" font-weight="400" stroke="#e6e5ea" stroke-width="0.3" textLength="128.7" lengthAdjust="spacingAndGlyphs">Euro / U.S. Dollar · 4h · OANDA</text>
<circle cx="190" cy="35.3" r="4.5" stroke="#1f3b35" stroke-width="1.6" fill="none"/>
<circle cx="190" cy="35.3" r="2.4" fill="#2cb39a"/>
<text x="200.0" y="38.2" font-size="8.19" fill="#dcdbe0" font-weight="400" stroke="#dcdbe0" stroke-width="0.28" textLength="5.5" lengthAdjust="spacingAndGlyphs">O</text>
<text x="206.7" y="38.2" font-size="8.19" fill="#e5463f" font-weight="400" stroke="#e5463f" stroke-width="0.28" textLength="26.3" lengthAdjust="spacingAndGlyphs">1.16478</text>
<text x="236.4" y="38.2" font-size="8.19" fill="#dcdbe0" font-weight="400" stroke="#dcdbe0" stroke-width="0.28" textLength="4.2" lengthAdjust="spacingAndGlyphs">H</text>
<text x="241.7" y="38.2" font-size="8.19" fill="#e5463f" font-weight="400" stroke="#e5463f" stroke-width="0.28" textLength="27.0" lengthAdjust="spacingAndGlyphs">1.16486</text>
<text x="273.0" y="38.2" font-size="8.19" fill="#dcdbe0" font-weight="400" stroke="#dcdbe0" stroke-width="0.28" textLength="3.8" lengthAdjust="spacingAndGlyphs">L</text>
<text x="277.5" y="38.2" font-size="8.19" fill="#e5463f" font-weight="400" stroke="#e5463f" stroke-width="0.28" textLength="26.5" lengthAdjust="spacingAndGlyphs">1.16442</text>
<text x="307.5" y="38.2" font-size="8.19" fill="#dcdbe0" font-weight="400" stroke="#dcdbe0" stroke-width="0.28" textLength="4.5" lengthAdjust="spacingAndGlyphs">C</text>
<text x="313.0" y="38.2" font-size="8.19" fill="#e5463f" font-weight="400" stroke="#e5463f" stroke-width="0.28" textLength="27.0" lengthAdjust="spacingAndGlyphs">1.16448</text>
<text x="343.7" y="38.2" font-size="8.19" fill="#e5463f" font-weight="400" stroke="#e5463f" stroke-width="0.28" textLength="62.0" lengthAdjust="spacingAndGlyphs">−0.00030 (−0.03%)</text>
<text x="409.4" y="38.2" font-size="8.19" fill="#dcdbe0" font-weight="400" stroke="#dcdbe0" stroke-width="0.28" textLength="10.6" lengthAdjust="spacingAndGlyphs">Vol</text>
<text x="420.2" y="38.2" font-size="8.19" fill="#e5463f" font-weight="400" stroke="#e5463f" stroke-width="0.28" textLength="11.8" lengthAdjust="spacingAndGlyphs">736</text>
<text x="436.7" y="38.2" font-size="8.19" fill="#2ba38e" font-weight="400" stroke="#2ba38e" stroke-width="0.28" textLength="61.6" lengthAdjust="spacingAndGlyphs">+0.00103 (+0.09%)</text>
<rect x="37.9" y="44.6" width="39.4" height="19.6" rx="3.5" fill="#140f12" stroke="#a3373b" stroke-width="1"/>
<text x="44.8" y="52.4" font-size="7.78" fill="#e5433f" font-weight="400" stroke="#e5433f" stroke-width="0.3" textLength="26.5" lengthAdjust="spacingAndGlyphs">1.16439</text>
<text x="50.2" y="61.1" font-size="8.19" fill="#b23b3b" font-weight="400" stroke="#b23b3b" stroke-width="0.28" textLength="13.8" lengthAdjust="spacingAndGlyphs">SELL</text>
<text x="82.6" y="56.8" font-size="6.39" fill="#e6e5ea" font-weight="700" textLength="8.4" lengthAdjust="spacingAndGlyphs">1.7</text>
<rect x="95.8" y="44.6" width="39.0" height="19.6" rx="3.5" fill="#0f1018" stroke="#2c4bb3" stroke-width="1"/>
<text x="102.7" y="52.4" font-size="7.78" fill="#3f6ff0" font-weight="400" stroke="#3f6ff0" stroke-width="0.3" textLength="26.0" lengthAdjust="spacingAndGlyphs">1.16456</text>
<text x="109.0" y="61.1" font-size="8.19" fill="#3558c0" font-weight="400" stroke="#3558c0" stroke-width="0.28" textLength="11.8" lengthAdjust="spacingAndGlyphs">BUY</text>
<text x="1014.5" y="76.9" font-size="7.50" fill="#c9c8cd" font-weight="400" stroke="#c9c8cd" stroke-width="0.28" textLength="24.5" lengthAdjust="spacingAndGlyphs">1.22000</text>
<text x="1014.5" y="111.0" font-size="7.50" fill="#c9c8cd" font-weight="400" stroke="#c9c8cd" stroke-width="0.28" textLength="24.5" lengthAdjust="spacingAndGlyphs">1.20000</text>
<text x="1014.5" y="144.2" font-size="7.50" fill="#c9c8cd" font-weight="400" stroke="#c9c8cd" stroke-width="0.28" textLength="24.5" lengthAdjust="spacingAndGlyphs">1.18000</text>
<text x="1014.5" y="210.0" font-size="7.50" fill="#c9c8cd" font-weight="400" stroke="#c9c8cd" stroke-width="0.28" textLength="24.5" lengthAdjust="spacingAndGlyphs">1.14000</text>
<text x="1014.5" y="243.7" font-size="7.50" fill="#c9c8cd" font-weight="400" stroke="#c9c8cd" stroke-width="0.28" textLength="24.5" lengthAdjust="spacingAndGlyphs">1.12000</text>
<text x="1014.5" y="277.3" font-size="7.50" fill="#c9c8cd" font-weight="400" stroke="#c9c8cd" stroke-width="0.28" textLength="24.5" lengthAdjust="spacingAndGlyphs">1.10000</text>
<rect x="1011.2" y="28.2" width="38.2" height="14.3" rx="2.5" fill="none" stroke="#3a383e" stroke-width="1"/>
<text x="1014.2" y="38.2" font-size="7.78" fill="#e0dfe4" font-weight="400" stroke="#e0dfe4" stroke-width="0.28" textLength="12.3" lengthAdjust="spacingAndGlyphs">USD</text>
<path d="M1043.8 34.6 L1045.3 36 L1046.8 34.6" stroke="#c8c7cc" stroke-width="1.0" fill="none" stroke-linecap="round" stroke-linejoin="round" />
<rect x="1009.4" y="162" width="34.9" height="18.8" rx="1" fill="#f2453f"/>
<text x="1014.6" y="169.6" font-size="7.22" fill="#ffffff" font-weight="400" stroke="#ffffff" stroke-width="0.35" textLength="25.0" lengthAdjust="spacingAndGlyphs">1.16448</text>
<text x="1013.0" y="178.0" font-size="7.22" fill="#ffffff" font-weight="400" stroke="#ffffff" stroke-width="0.28" textLength="28.6" lengthAdjust="spacingAndGlyphs">03:48:50</text>
<text x="1014.0" y="293.4" font-size="7.22" fill="#c9c8cd" font-weight="400" stroke="#c9c8cd" stroke-width="0.28" textLength="28.3" lengthAdjust="spacingAndGlyphs">12.00000</text>
<text x="1015.5" y="318.4" font-size="7.22" fill="#c9c8cd" font-weight="400" stroke="#c9c8cd" stroke-width="0.28" textLength="25.2" lengthAdjust="spacingAndGlyphs">8.00000</text>
<text x="1015.5" y="342.6" font-size="7.22" fill="#c9c8cd" font-weight="400" stroke="#c9c8cd" stroke-width="0.28" textLength="25.2" lengthAdjust="spacingAndGlyphs">4.00000</text>
<text x="1015.5" y="368.6" font-size="7.22" fill="#c9c8cd" font-weight="400" stroke="#c9c8cd" stroke-width="0.28" textLength="25.2" lengthAdjust="spacingAndGlyphs">0.00000</text>
<text x="1013.6" y="393.2" font-size="7.22" fill="#c9c8cd" font-weight="400" stroke="#c9c8cd" stroke-width="0.28" textLength="27.9" lengthAdjust="spacingAndGlyphs">−4.00000</text>
<text x="1013.6" y="417.9" font-size="7.22" fill="#c9c8cd" font-weight="400" stroke="#c9c8cd" stroke-width="0.28" textLength="27.9" lengthAdjust="spacingAndGlyphs">−8.00000</text>
<text x="1013.6" y="442.3" font-size="7.22" fill="#c9c8cd" font-weight="400" stroke="#c9c8cd" stroke-width="0.28" textLength="32.4" lengthAdjust="spacingAndGlyphs">−12.00000</text>
<rect x="1009.2" y="342.2" width="32.6" height="10.4" fill="#1fbf76"/>
<text x="1012.5" y="350.0" font-size="7.22" fill="#0c1a12" font-weight="400" stroke="#0c1a12" stroke-width="0.28" textLength="27.5" lengthAdjust="spacingAndGlyphs">3.00000</text>
<rect x="1009.2" y="380.2" width="36.6" height="9.6" fill="#f05e4a"/>
<text x="1012.5" y="387.6" font-size="7.22" fill="#ffffff" font-weight="400" stroke="#ffffff" stroke-width="0.28" textLength="31.0" lengthAdjust="spacingAndGlyphs">−3.00000</text>
<rect x="1009.2" y="404.8" width="36.6" height="10" fill="#f05e4a"/>
<text x="1012.5" y="412.4" font-size="7.22" fill="#ffffff" font-weight="400" stroke="#ffffff" stroke-width="0.28" textLength="31.0" lengthAdjust="spacingAndGlyphs">−7.00000</text>
<circle cx="998" cy="279.3" r="5.4" fill="#f0eef2"/><path d="M992.8 280.2 H1003.2 M993.4 282.4 H1002.6" stroke="#e04848" stroke-width="1.3"/><path d="M992.8 279 A5.4 5.4 0 0 1 998.4 273.9 V279 Z" fill="#3a7fe0"/><circle cx="998" cy="279.3" r="5.8" fill="none" stroke="#c9373d" stroke-width="1"/>
<text x="38.6" y="301.4" font-size="8.33" fill="#e8e7eb" font-weight="400" stroke="#e8e7eb" stroke-width="0.15" textLength="57.6" lengthAdjust="spacingAndGlyphs">RADAR Oscillator</text>
<text x="98.2" y="301.2" font-size="8.33" fill="#a9a8ad" font-weight="400" stroke="#a9a8ad" stroke-width="0.28" textLength="299.8" lengthAdjust="spacingAndGlyphs">5 3 -3 20 1.9 22 55 3 10 {"action": "enter_long", "ticker": "{{ticker}}", "price": "{{close}}"}</text>
<text x="402.0" y="301.2" font-size="8.33" fill="#a9a8ad" font-weight="400" stroke="#a9a8ad" stroke-width="0.28" textLength="219.5" lengthAdjust="spacingAndGlyphs">{"action": "enter_short", "ticker": "{{ticker}}", "price": "{{close}}"}</text>
<text x="626.7" y="301.2" font-size="8.33" fill="#f0623f" font-weight="400" stroke="#f0623f" stroke-width="0.28" textLength="31.1" lengthAdjust="spacingAndGlyphs">−7.00000</text>
<text x="662.0" y="301.2" font-size="8.33" fill="#d8d7dc" font-weight="400" stroke="#d8d7dc" stroke-width="0.28" textLength="6.0" lengthAdjust="spacingAndGlyphs">Ø</text>
<text x="670.5" y="301.2" font-size="8.33" fill="#d8d7dc" font-weight="400" stroke="#d8d7dc" stroke-width="0.28" textLength="6.0" lengthAdjust="spacingAndGlyphs">Ø</text>
<line x1="154.2" y1="349" x2="154.2" y2="365.6" stroke="#f26552" stroke-width="1.4"/>
<rect x="141.8" y="338.4" width="24.7" height="10.6" rx="1.5" fill="#f26552"/>
<path d="M151.65 349 L154.15 351.8 L156.65 349Z" fill="#f26552"/>
<text x="145.0" y="345.9" font-size="6.11" fill="#ffffff" font-weight="700" textLength="18.3" lengthAdjust="spacingAndGlyphs">SHORT</text>
<rect x="163" y="350" width="21.8" height="11.6" rx="1.5" fill="#1fc97e"/>
<path d="M171.4 350 L173.9 347.2 L176.4 350Z" fill="#1fc97e"/>
<line x1="173.9" y1="361.6" x2="173.9" y2="365.6" stroke="#1fc97e" stroke-width="1.2"/>
<text x="167.0" y="358.0" font-size="6.11" fill="#0d3b25" font-weight="400" stroke="#0d3b25" stroke-width="0.28" textLength="13.8" lengthAdjust="spacingAndGlyphs">LONG</text>
<rect x="344.8" y="376.5" width="21.2" height="10.5" rx="1.5" fill="#f26552"/>
<path d="M352.9 387 L355.4 389.8 L357.9 387Z" fill="#f26552"/>
<line x1="355.4" y1="365.6" x2="355.4" y2="376.5" stroke="#f26552" stroke-width="1.2"/>
<text x="348.0" y="383.9" font-size="6.11" fill="#ffffff" font-weight="700" textLength="14.8" lengthAdjust="spacingAndGlyphs">SHORT</text>
<rect x="565.6" y="350.5" width="21.4" height="11.2" rx="1.5" fill="#1fc97e"/>
<path d="M573.8 350.5 L576.3 347.7 L578.8 350.5Z" fill="#1fc97e"/>
<line x1="576.3" y1="361.7" x2="576.3" y2="365.6" stroke="#1fc97e" stroke-width="1.2"/>
<text x="569.6" y="358.3" font-size="6.11" fill="#0d3b25" font-weight="400" stroke="#0d3b25" stroke-width="0.28" textLength="13.4" lengthAdjust="spacingAndGlyphs">LONG</text>
<rect x="907.6" y="370" width="25.4" height="11.0" rx="1.5" fill="#f26552"/>
<path d="M917.8 381 L920.3 383.8 L922.8 381Z" fill="#f26552"/>
<line x1="920.3" y1="365.6" x2="920.3" y2="370" stroke="#f26552" stroke-width="1.2"/>
<text x="910.8" y="377.7" font-size="6.11" fill="#ffffff" font-weight="700" textLength="19.0" lengthAdjust="spacingAndGlyphs">SHORT</text>
<path d="M40 429.5 H47.2 V438.5 H44 V432.6 H40 Z" fill="#f0eff3"/><circle cx="49.6" cy="431.2" r="1.6" fill="#f0eff3"/><path d="M53.2 429.5 H58.2 L53.6 438.5 H49.6 Z" fill="#f0eff3"/>
<text x="149.8" y="457.7" font-size="7.50" fill="#c9c8cd" font-weight="400" stroke="#c9c8cd" stroke-width="0.28" textLength="10.5" lengthAdjust="spacingAndGlyphs">Jun</text>
<text x="298.1" y="457.7" font-size="7.50" fill="#c9c8cd" font-weight="400" stroke="#c9c8cd" stroke-width="0.28" textLength="11.0" lengthAdjust="spacingAndGlyphs">Jul</text>
<text x="460.5" y="457.7" font-size="7.50" fill="#c9c8cd" font-weight="400" stroke="#c9c8cd" stroke-width="0.28" textLength="11.0" lengthAdjust="spacingAndGlyphs">Aug</text>
<text x="608.5" y="457.7" font-size="7.50" fill="#c9c8cd" font-weight="400" stroke="#c9c8cd" stroke-width="0.28" textLength="11.0" lengthAdjust="spacingAndGlyphs">Sep</text>
<text x="762.5" y="457.7" font-size="7.50" fill="#c9c8cd" font-weight="400" stroke="#c9c8cd" stroke-width="0.28" textLength="11.0" lengthAdjust="spacingAndGlyphs">Oct</text>
<text x="925.5" y="457.7" font-size="7.50" fill="#c9c8cd" font-weight="400" stroke="#c9c8cd" stroke-width="0.28" textLength="11.0" lengthAdjust="spacingAndGlyphs">Nov</text>
<circle cx="1031" cy="455" r="3.2" stroke="#8f8d93" stroke-width="1.0" fill="none"/>
<circle cx="1031" cy="455" r="1.0" stroke="#8f8d93" stroke-width="0.9" fill="none"/>
<text x="42.0" y="477.9" font-size="9.17" fill="#dcdbe0" font-weight="400" stroke="#dcdbe0" stroke-width="0.28" textLength="9.4" lengthAdjust="spacingAndGlyphs">1D</text>
<text x="58.1" y="477.9" font-size="9.17" fill="#dcdbe0" font-weight="400" stroke="#dcdbe0" stroke-width="0.28" textLength="9.4" lengthAdjust="spacingAndGlyphs">5D</text>
<text x="75.0" y="477.9" font-size="9.17" fill="#dcdbe0" font-weight="400" stroke="#dcdbe0" stroke-width="0.28" textLength="10.0" lengthAdjust="spacingAndGlyphs">1M</text>
<text x="92.0" y="477.9" font-size="9.17" fill="#dcdbe0" font-weight="400" stroke="#dcdbe0" stroke-width="0.28" textLength="10.0" lengthAdjust="spacingAndGlyphs">3M</text>
<text x="108.6" y="477.9" font-size="9.17" fill="#dcdbe0" font-weight="400" stroke="#dcdbe0" stroke-width="0.28" textLength="10.0" lengthAdjust="spacingAndGlyphs">6M</text>
<text x="126.6" y="477.9" font-size="9.17" fill="#dcdbe0" font-weight="400" stroke="#dcdbe0" stroke-width="0.28" textLength="14.0" lengthAdjust="spacingAndGlyphs">YTD</text>
<text x="148.0" y="477.9" font-size="9.17" fill="#dcdbe0" font-weight="400" stroke="#dcdbe0" stroke-width="0.28" textLength="9.0" lengthAdjust="spacingAndGlyphs">1Y</text>
<text x="164.1" y="477.9" font-size="9.17" fill="#dcdbe0" font-weight="400" stroke="#dcdbe0" stroke-width="0.28" textLength="9.0" lengthAdjust="spacingAndGlyphs">5Y</text>
<text x="180.2" y="477.9" font-size="9.17" fill="#dcdbe0" font-weight="400" stroke="#dcdbe0" stroke-width="0.28" textLength="9.5" lengthAdjust="spacingAndGlyphs">All</text>
<rect x="196" y="467" width="1" height="15" fill="#3a383e" />
<path d="M206 476.5 V471 a1.5 1.5 0 0 1 1.5 -1.5 H214 a1.5 1.5 0 0 1 1.5 1.5 V477.5 a1.5 1.5 0 0 1 -1.5 1.5 H210.5 M206 472.6 H215.5 M208.3 468.2v2.4 M213.2 468.2v2.4 M204.2 477.2 H208.8 M207.2 475.6 L208.8 477.2 L207.2 478.8" stroke="#c8c7cc" stroke-width="1.0" fill="none" stroke-linecap="round" stroke-linejoin="round" />
<text x="987.5" y="478.0" font-size="8.33" fill="#e6e5ea" font-weight="400" stroke="#e6e5ea" stroke-width="0.28" textLength="58.5" lengthAdjust="spacingAndGlyphs">08:11:09 UTC+2</text>
<text x="42.5" y="502.6" font-size="8.89" fill="#dcdbe0" font-weight="400" stroke="#dcdbe0" stroke-width="0.28" textLength="40.3" lengthAdjust="spacingAndGlyphs">Pine Editor</text>
<text x="101.7" y="502.6" font-size="8.89" fill="#dcdbe0" font-weight="400" stroke="#dcdbe0" stroke-width="0.28" textLength="55.3" lengthAdjust="spacingAndGlyphs">Strategy Tester</text>
<text x="176.7" y="502.6" font-size="8.89" fill="#dcdbe0" font-weight="400" stroke="#dcdbe0" stroke-width="0.28" textLength="49.1" lengthAdjust="spacingAndGlyphs">Trading Panel</text>
<path d="M1015.6 501.2 L1019.5 497.3 L1023.4 501.2" stroke="#c8c7cc" stroke-width="1.1" fill="none" stroke-linecap="round" stroke-linejoin="round" />
<path d="M1036.5 495.5 V494 H1045.5 V495.5 M1036.5 502.5 V504 H1045.5 V502.5" stroke="#c8c7cc" stroke-width="1.1" fill="none" stroke-linecap="round" stroke-linejoin="round" />
<g transform="translate(1.2 0)">
<path d="M1061.5 34 H1072.5 V46.5 L1067 43.8 L1061.5 46.5 Z M1064 37.4 H1070 M1064 40 H1070 M1064 42.4 H1068" stroke="#cfced3" stroke-width="1.1" fill="none" stroke-linecap="round" stroke-linejoin="round" />
<circle cx="1067" cy="66.6" r="5.6" stroke="#cfced3" stroke-width="1.1" fill="none"/>
<path d="M1067 63.4 V66.8 H1069.4 M1061.8 61 L1063.6 59.4 M1072.2 61 L1070.4 59.4 M1063.4 71 L1062.2 72.4 M1070.6 71 L1071.8 72.4" stroke="#cfced3" stroke-width="1.0" fill="none" stroke-linecap="round" stroke-linejoin="round" />
<path d="M1067 88.6 L1074 92.6 L1067 96.6 L1060 92.6 Z M1060 95.6 L1067 99.6 L1074 95.6" stroke="#cfced3" stroke-width="1.1" fill="none" stroke-linecap="round" stroke-linejoin="round" />
<path d="M1060 115.8 H1070.4 V123.6 H1064 L1061.6 126 V123.6 H1060 Z M1072 119 H1074.4 V127 H1072.8 V129 L1070.6 127 H1065.6 V125.2" stroke="#cfced3" stroke-width="1.1" fill="none" stroke-linecap="round" stroke-linejoin="round" />
</g>
<circle cx="1068.7" cy="354.6" r="7.4" stroke="#cfced3" stroke-width="1.1" fill="none"/>
<circle cx="1068.7" cy="354.6" r="3.8" stroke="#cfced3" stroke-width="1.0" fill="none"/>
<path d="M1068.7 354.6 L1073.8 349.5" stroke="#cfced3" stroke-width="1.3" fill="none" stroke-linecap="round" stroke-linejoin="round" />
<rect x="1061.4" y="375.4" width="14.6" height="12.6" rx="1.8" fill="none" stroke="#cfced3" stroke-width="1.1"/>
<path d="M1061.4 379.4 H1076 M1065 373.4 V376.6 M1072.4 373.4 V376.6" stroke="#cfced3" stroke-width="1.1" fill="none" stroke-linecap="round" stroke-linejoin="round" />
<path d="M1062.4 402 a10 10 0 0 1 10.6 10.6 M1062.4 405.4 a6.6 6.6 0 0 1 7.2 7.2 M1062.4 408.8 a3.2 3.2 0 0 1 3.8 3.8" stroke="#cfced3" stroke-width="1.1" fill="none" stroke-linecap="round" stroke-linejoin="round" />
<circle cx="1063" cy="412.2" r="1" fill="#cfced3"/>
<path d="M1063 440 V435.4 a5 5 0 0 1 10 0 V440 L1074.4 441.6 H1061.6 Z M1066.6 443.4 a1.6 1.6 0 0 0 2.8 0 M1068 429.2 V430.4" stroke="#cfced3" stroke-width="1.1" fill="none" stroke-linecap="round" stroke-linejoin="round" />
<circle cx="1068.7" cy="463" r="10.4" stroke="none" stroke-width="0" fill="#f1f0f3"/>
<circle cx="1065.2" cy="459.5" r="1.3" fill="#141216"/>
<circle cx="1065.2" cy="463" r="1.3" fill="#141216"/>
<circle cx="1065.2" cy="466.5" r="1.3" fill="#141216"/>
<circle cx="1068.7" cy="459.5" r="1.3" fill="#141216"/>
<circle cx="1068.7" cy="463" r="1.3" fill="#141216"/>
<circle cx="1068.7" cy="466.5" r="1.3" fill="#141216"/>
<circle cx="1072.2" cy="459.5" r="1.3" fill="#141216"/>
<circle cx="1072.2" cy="463" r="1.3" fill="#141216"/>
<circle cx="1072.2" cy="466.5" r="1.3" fill="#141216"/>
<rect x="1060" y="479" width="17" height="1" fill="#2f2d33" />
<circle cx="1068.7" cy="497" r="8.0" stroke="#cfced3" stroke-width="1.1" fill="none"/>
<path d="M1066.4 494.8 a2.3 2.3 0 1 1 3.2 2.1 c-0.6 0.3 -0.9 0.7 -0.9 1.4 v0.5" stroke="#cfced3" stroke-width="1.1" fill="none" stroke-linecap="round" stroke-linejoin="round" />
<circle cx="1068.7" cy="501.2" r="0.75" fill="#cfced3"/>
</svg>
</body></html>
